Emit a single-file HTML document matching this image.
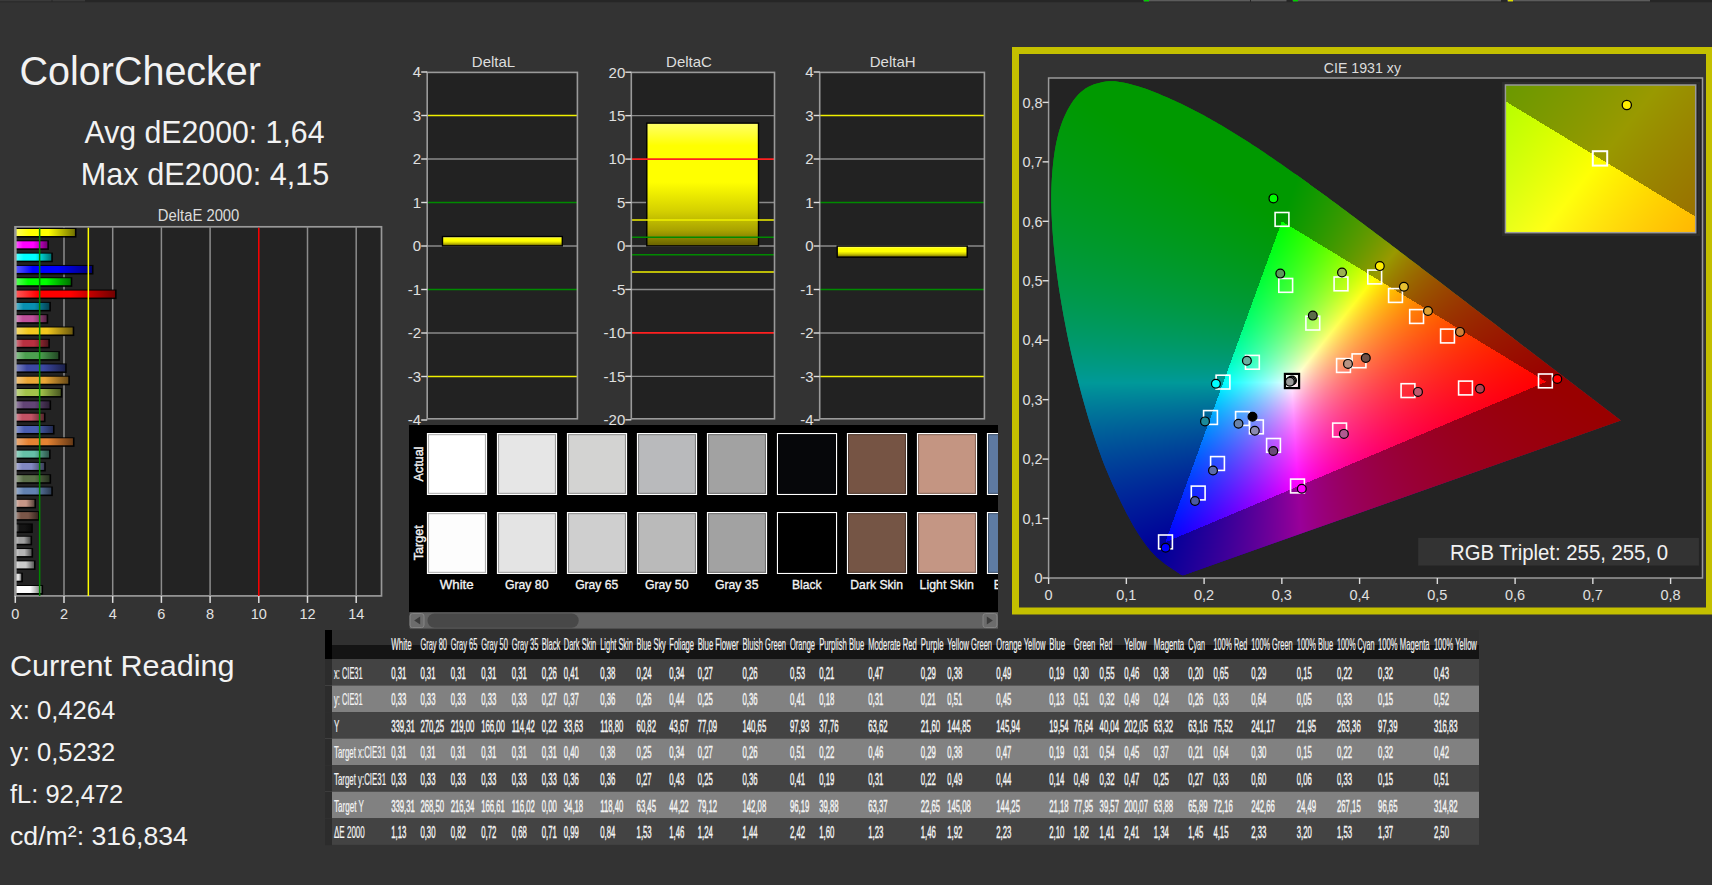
<!DOCTYPE html>
<html><head><meta charset="utf-8"><title>ColorChecker</title>
<style>
html,body{margin:0;padding:0;background:#333333;width:1712px;height:885px;overflow:hidden}
#root{position:relative;width:1712px;height:885px}
#root svg,#root canvas{position:absolute;left:0;top:0;display:block}
text{font-family:"Liberation Sans",sans-serif}
</style></head><body><div id="root">
<svg id="base" width="1712" height="885" viewBox="0 0 1712 885">
<rect x="0" y="0" width="1712" height="885" fill="#333333"/>
<rect x="0" y="0" width="1712" height="2.2" fill="#262626"/>
<rect x="0" y="0" width="51.5" height="1.4" fill="#3a3a3a"/>
<rect x="52.5" y="0" width="32.5" height="1.4" fill="#3a3a3a"/>
<rect x="1143.4" y="0" width="106.6" height="1.4" fill="#5c5c5c"/>
<rect x="1251" y="0" width="35.5" height="1.4" fill="#5c5c5c"/>
<rect x="1292.6" y="0" width="208.4" height="1.4" fill="#5c5c5c"/>
<rect x="1507" y="0" width="143.0" height="1.4" fill="#5c5c5c"/>
<rect x="1144" y="0" width="5" height="1.4" fill="#00d000"/>
<rect x="1293" y="0" width="5" height="1.4" fill="#00d000"/>
<rect x="1508" y="0" width="5" height="1.4" fill="#e0e000"/>
<text x="19.50" y="85.30" font-size="41" fill="#f2f2f2" textLength="241.50" lengthAdjust="spacingAndGlyphs" >ColorChecker</text>
<text x="84.50" y="142.90" font-size="30.5" fill="#f2f2f2" textLength="240.00" lengthAdjust="spacingAndGlyphs" >Avg dE2000: 1,64</text>
<text x="80.80" y="185.20" font-size="30.5" fill="#f2f2f2" textLength="248.60" lengthAdjust="spacingAndGlyphs" >Max dE2000: 4,15</text>
<text x="198.60" y="220.90" font-size="15.8" fill="#dcdcdc" text-anchor="middle" textLength="81.50" lengthAdjust="spacingAndGlyphs" >DeltaE 2000</text>
<rect x="15.0" y="226.8" width="366.5" height="369.09999999999997" fill="#232323" stroke="#999999" stroke-width="1.7"/>
<line x1="64.00" y1="226.8" x2="64.00" y2="595.9" stroke="#8c8c8c" stroke-width="1.5"/>
<line x1="112.70" y1="226.8" x2="112.70" y2="595.9" stroke="#8c8c8c" stroke-width="1.5"/>
<line x1="161.40" y1="226.8" x2="161.40" y2="595.9" stroke="#8c8c8c" stroke-width="1.5"/>
<line x1="210.10" y1="226.8" x2="210.10" y2="595.9" stroke="#8c8c8c" stroke-width="1.5"/>
<line x1="307.50" y1="226.8" x2="307.50" y2="595.9" stroke="#8c8c8c" stroke-width="1.5"/>
<line x1="356.20" y1="226.8" x2="356.20" y2="595.9" stroke="#8c8c8c" stroke-width="1.5"/>
<rect x="16.00" y="228.00" width="60.48" height="9.6" fill="#000000" opacity="0.92"/>
<rect x="16.00" y="229.00" width="58.88" height="7" fill="url(#bg0)"/>
<rect x="16.00" y="240.31" width="32.96" height="9.6" fill="#000000" opacity="0.92"/>
<rect x="16.00" y="241.31" width="31.36" height="7" fill="url(#bg1)"/>
<rect x="16.00" y="252.62" width="36.86" height="9.6" fill="#000000" opacity="0.92"/>
<rect x="16.00" y="253.62" width="35.26" height="7" fill="url(#bg2)"/>
<rect x="16.00" y="264.93" width="77.52" height="9.6" fill="#000000" opacity="0.92"/>
<rect x="16.00" y="265.93" width="75.92" height="7" fill="url(#bg3)"/>
<rect x="16.00" y="277.24" width="56.34" height="9.6" fill="#000000" opacity="0.92"/>
<rect x="16.00" y="278.24" width="54.74" height="7" fill="url(#bg4)"/>
<rect x="16.00" y="289.55" width="100.65" height="9.6" fill="#000000" opacity="0.92"/>
<rect x="16.00" y="290.55" width="99.05" height="7" fill="url(#bg5)"/>
<rect x="16.00" y="301.86" width="34.91" height="9.6" fill="#000000" opacity="0.92"/>
<rect x="16.00" y="302.86" width="33.31" height="7" fill="url(#bg6)"/>
<rect x="16.00" y="314.17" width="32.23" height="9.6" fill="#000000" opacity="0.92"/>
<rect x="16.00" y="315.17" width="30.63" height="7" fill="url(#bg7)"/>
<rect x="16.00" y="326.48" width="58.28" height="9.6" fill="#000000" opacity="0.92"/>
<rect x="16.00" y="327.48" width="56.68" height="7" fill="url(#bg8)"/>
<rect x="16.00" y="338.79" width="33.93" height="9.6" fill="#000000" opacity="0.92"/>
<rect x="16.00" y="339.79" width="32.33" height="7" fill="url(#bg9)"/>
<rect x="16.00" y="351.10" width="43.92" height="9.6" fill="#000000" opacity="0.92"/>
<rect x="16.00" y="352.10" width="42.32" height="7" fill="url(#bg10)"/>
<rect x="16.00" y="363.41" width="50.74" height="9.6" fill="#000000" opacity="0.92"/>
<rect x="16.00" y="364.41" width="49.14" height="7" fill="url(#bg11)"/>
<rect x="16.00" y="375.72" width="53.90" height="9.6" fill="#000000" opacity="0.92"/>
<rect x="16.00" y="376.72" width="52.30" height="7" fill="url(#bg12)"/>
<rect x="16.00" y="388.03" width="46.35" height="9.6" fill="#000000" opacity="0.92"/>
<rect x="16.00" y="389.03" width="44.75" height="7" fill="url(#bg13)"/>
<rect x="16.00" y="400.34" width="35.15" height="9.6" fill="#000000" opacity="0.92"/>
<rect x="16.00" y="401.34" width="33.55" height="7" fill="url(#bg14)"/>
<rect x="16.00" y="412.65" width="29.55" height="9.6" fill="#000000" opacity="0.92"/>
<rect x="16.00" y="413.65" width="27.95" height="7" fill="url(#bg15)"/>
<rect x="16.00" y="424.96" width="38.56" height="9.6" fill="#000000" opacity="0.92"/>
<rect x="16.00" y="425.96" width="36.96" height="7" fill="url(#bg16)"/>
<rect x="16.00" y="437.27" width="58.53" height="9.6" fill="#000000" opacity="0.92"/>
<rect x="16.00" y="438.27" width="56.93" height="7" fill="url(#bg17)"/>
<rect x="16.00" y="449.58" width="34.66" height="9.6" fill="#000000" opacity="0.92"/>
<rect x="16.00" y="450.58" width="33.06" height="7" fill="url(#bg18)"/>
<rect x="16.00" y="461.89" width="29.79" height="9.6" fill="#000000" opacity="0.92"/>
<rect x="16.00" y="462.89" width="28.19" height="7" fill="url(#bg19)"/>
<rect x="16.00" y="474.20" width="35.15" height="9.6" fill="#000000" opacity="0.92"/>
<rect x="16.00" y="475.20" width="33.55" height="7" fill="url(#bg20)"/>
<rect x="16.00" y="486.51" width="36.86" height="9.6" fill="#000000" opacity="0.92"/>
<rect x="16.00" y="487.51" width="35.26" height="7" fill="url(#bg21)"/>
<rect x="16.00" y="498.82" width="20.05" height="9.6" fill="#000000" opacity="0.92"/>
<rect x="16.00" y="499.82" width="18.45" height="7" fill="url(#bg22)"/>
<rect x="16.00" y="511.13" width="23.71" height="9.6" fill="#000000" opacity="0.92"/>
<rect x="16.00" y="512.13" width="22.11" height="7" fill="url(#bg23)"/>
<rect x="16.00" y="523.44" width="16.89" height="9.6" fill="#000000" opacity="0.92"/>
<rect x="16.00" y="524.44" width="15.29" height="7" fill="url(#bg24)"/>
<rect x="16.00" y="535.75" width="16.16" height="9.6" fill="#000000" opacity="0.92"/>
<rect x="16.00" y="536.75" width="14.56" height="7" fill="url(#bg25)"/>
<rect x="16.00" y="548.06" width="17.13" height="9.6" fill="#000000" opacity="0.92"/>
<rect x="16.00" y="549.06" width="15.53" height="7" fill="url(#bg26)"/>
<rect x="16.00" y="560.37" width="19.57" height="9.6" fill="#000000" opacity="0.92"/>
<rect x="16.00" y="561.37" width="17.97" height="7" fill="url(#bg27)"/>
<rect x="16.00" y="572.68" width="6.90" height="9.6" fill="#000000" opacity="0.92"/>
<rect x="16.00" y="573.68" width="5.30" height="7" fill="url(#bg28)"/>
<rect x="16.00" y="584.99" width="27.12" height="9.6" fill="#000000" opacity="0.92"/>
<rect x="16.00" y="585.99" width="25.52" height="7" fill="url(#bg29)"/>
<line x1="39.65" y1="227.8" x2="39.65" y2="595.9" stroke="#008800" stroke-width="1.5"/>
<line x1="88.35" y1="227.8" x2="88.35" y2="595.9" stroke="#ffff00" stroke-width="1.5"/>
<line x1="258.80" y1="227.8" x2="258.80" y2="595.9" stroke="#ff0000" stroke-width="1.5"/>
<line x1="15.8" y1="226.8" x2="15.8" y2="595.9" stroke="#9a9a9a" stroke-width="1.7"/>
<line x1="15.30" y1="595.9" x2="15.30" y2="602.9" stroke="#dddddd" stroke-width="1.5"/>
<text x="15.30" y="618.70" font-size="14.5" fill="#e2e2e2" text-anchor="middle" >0</text>
<line x1="64.00" y1="595.9" x2="64.00" y2="602.9" stroke="#dddddd" stroke-width="1.5"/>
<text x="64.00" y="618.70" font-size="14.5" fill="#e2e2e2" text-anchor="middle" >2</text>
<line x1="112.70" y1="595.9" x2="112.70" y2="602.9" stroke="#dddddd" stroke-width="1.5"/>
<text x="112.70" y="618.70" font-size="14.5" fill="#e2e2e2" text-anchor="middle" >4</text>
<line x1="161.40" y1="595.9" x2="161.40" y2="602.9" stroke="#dddddd" stroke-width="1.5"/>
<text x="161.40" y="618.70" font-size="14.5" fill="#e2e2e2" text-anchor="middle" >6</text>
<line x1="210.10" y1="595.9" x2="210.10" y2="602.9" stroke="#dddddd" stroke-width="1.5"/>
<text x="210.10" y="618.70" font-size="14.5" fill="#e2e2e2" text-anchor="middle" >8</text>
<line x1="258.80" y1="595.9" x2="258.80" y2="602.9" stroke="#dddddd" stroke-width="1.5"/>
<text x="258.80" y="618.70" font-size="14.5" fill="#e2e2e2" text-anchor="middle" >10</text>
<line x1="307.50" y1="595.9" x2="307.50" y2="602.9" stroke="#dddddd" stroke-width="1.5"/>
<text x="307.50" y="618.70" font-size="14.5" fill="#e2e2e2" text-anchor="middle" >12</text>
<line x1="356.20" y1="595.9" x2="356.20" y2="602.9" stroke="#dddddd" stroke-width="1.5"/>
<text x="356.20" y="618.70" font-size="14.5" fill="#e2e2e2" text-anchor="middle" >14</text>
<text x="493.50" y="67.20" font-size="15" fill="#dedede" text-anchor="middle" >DeltaL</text>
<rect x="427.2" y="72.4" width="150.2" height="346.4" fill="#222222"/>
<line x1="427.2" y1="159.00" x2="577.4" y2="159.00" stroke="#8a8a8a" stroke-width="1.4"/>
<line x1="427.2" y1="246.00" x2="577.4" y2="246.00" stroke="#8a8a8a" stroke-width="1.4"/>
<line x1="427.2" y1="333.00" x2="577.4" y2="333.00" stroke="#8a8a8a" stroke-width="1.4"/>
<rect x="441.80" y="235.83" width="121.20" height="10.77" fill="#000000"/>
<rect x="443.20" y="237.23" width="118.40" height="7.97" fill="url(#g_DeltaL)"/>
<line x1="427.2" y1="115.50" x2="577.4" y2="115.50" stroke="#f0f000" stroke-width="1.6"/>
<line x1="427.2" y1="202.50" x2="577.4" y2="202.50" stroke="#008a00" stroke-width="1.6"/>
<line x1="427.2" y1="289.50" x2="577.4" y2="289.50" stroke="#008a00" stroke-width="1.6"/>
<line x1="427.2" y1="376.50" x2="577.4" y2="376.50" stroke="#f0f000" stroke-width="1.6"/>
<rect x="427.2" y="72.4" width="150.2" height="346.4" fill="none" stroke="#9a9a9a" stroke-width="1.6"/>
<line x1="421.2" y1="72.00" x2="427.2" y2="72.00" stroke="#dddddd" stroke-width="1.4"/>
<text x="421.20" y="77.30" font-size="15" fill="#e0e0e0" text-anchor="end" >4</text>
<line x1="421.2" y1="115.50" x2="427.2" y2="115.50" stroke="#dddddd" stroke-width="1.4"/>
<text x="421.20" y="120.80" font-size="15" fill="#e0e0e0" text-anchor="end" >3</text>
<line x1="421.2" y1="159.00" x2="427.2" y2="159.00" stroke="#dddddd" stroke-width="1.4"/>
<text x="421.20" y="164.30" font-size="15" fill="#e0e0e0" text-anchor="end" >2</text>
<line x1="421.2" y1="202.50" x2="427.2" y2="202.50" stroke="#dddddd" stroke-width="1.4"/>
<text x="421.20" y="207.80" font-size="15" fill="#e0e0e0" text-anchor="end" >1</text>
<line x1="421.2" y1="246.00" x2="427.2" y2="246.00" stroke="#dddddd" stroke-width="1.4"/>
<text x="421.20" y="251.30" font-size="15" fill="#e0e0e0" text-anchor="end" >0</text>
<line x1="421.2" y1="289.50" x2="427.2" y2="289.50" stroke="#dddddd" stroke-width="1.4"/>
<text x="421.20" y="294.80" font-size="15" fill="#e0e0e0" text-anchor="end" >-1</text>
<line x1="421.2" y1="333.00" x2="427.2" y2="333.00" stroke="#dddddd" stroke-width="1.4"/>
<text x="421.20" y="338.30" font-size="15" fill="#e0e0e0" text-anchor="end" >-2</text>
<line x1="421.2" y1="376.50" x2="427.2" y2="376.50" stroke="#dddddd" stroke-width="1.4"/>
<text x="421.20" y="381.80" font-size="15" fill="#e0e0e0" text-anchor="end" >-3</text>
<line x1="421.2" y1="420.00" x2="427.2" y2="420.00" stroke="#dddddd" stroke-width="1.4"/>
<text x="421.20" y="425.30" font-size="15" fill="#e0e0e0" text-anchor="end" >-4</text>
<text x="689.00" y="67.20" font-size="15" fill="#dedede" text-anchor="middle" >DeltaC</text>
<rect x="631.3" y="72.4" width="143.20000000000005" height="346.4" fill="#222222"/>
<line x1="631.3" y1="115.65" x2="774.5" y2="115.65" stroke="#8a8a8a" stroke-width="1.4"/>
<line x1="631.3" y1="202.55" x2="774.5" y2="202.55" stroke="#8a8a8a" stroke-width="1.4"/>
<line x1="631.3" y1="246.00" x2="774.5" y2="246.00" stroke="#8a8a8a" stroke-width="1.4"/>
<line x1="631.3" y1="289.45" x2="774.5" y2="289.45" stroke="#8a8a8a" stroke-width="1.4"/>
<line x1="631.3" y1="376.35" x2="774.5" y2="376.35" stroke="#8a8a8a" stroke-width="1.4"/>
<rect x="646.10" y="122.44" width="113.10" height="124.16" fill="#000000"/>
<rect x="647.50" y="123.84" width="110.30" height="121.36" fill="url(#g_DeltaC)"/>
<line x1="631.3" y1="159.10" x2="774.5" y2="159.10" stroke="#ff2020" stroke-width="1.6"/>
<line x1="631.3" y1="219.93" x2="774.5" y2="219.93" stroke="#f0f000" stroke-width="1.6"/>
<line x1="631.3" y1="237.31" x2="774.5" y2="237.31" stroke="#008a00" stroke-width="1.6"/>
<line x1="631.3" y1="254.69" x2="774.5" y2="254.69" stroke="#008a00" stroke-width="1.6"/>
<line x1="631.3" y1="272.07" x2="774.5" y2="272.07" stroke="#f0f000" stroke-width="1.6"/>
<line x1="631.3" y1="332.90" x2="774.5" y2="332.90" stroke="#ff2020" stroke-width="1.6"/>
<rect x="631.3" y="72.4" width="143.20000000000005" height="346.4" fill="none" stroke="#9a9a9a" stroke-width="1.6"/>
<line x1="625.3" y1="72.20" x2="631.3" y2="72.20" stroke="#dddddd" stroke-width="1.4"/>
<text x="625.30" y="77.50" font-size="15" fill="#e0e0e0" text-anchor="end" >20</text>
<line x1="625.3" y1="115.65" x2="631.3" y2="115.65" stroke="#dddddd" stroke-width="1.4"/>
<text x="625.30" y="120.95" font-size="15" fill="#e0e0e0" text-anchor="end" >15</text>
<line x1="625.3" y1="159.10" x2="631.3" y2="159.10" stroke="#dddddd" stroke-width="1.4"/>
<text x="625.30" y="164.40" font-size="15" fill="#e0e0e0" text-anchor="end" >10</text>
<line x1="625.3" y1="202.55" x2="631.3" y2="202.55" stroke="#dddddd" stroke-width="1.4"/>
<text x="625.30" y="207.85" font-size="15" fill="#e0e0e0" text-anchor="end" >5</text>
<line x1="625.3" y1="246.00" x2="631.3" y2="246.00" stroke="#dddddd" stroke-width="1.4"/>
<text x="625.30" y="251.30" font-size="15" fill="#e0e0e0" text-anchor="end" >0</text>
<line x1="625.3" y1="289.45" x2="631.3" y2="289.45" stroke="#dddddd" stroke-width="1.4"/>
<text x="625.30" y="294.75" font-size="15" fill="#e0e0e0" text-anchor="end" >-5</text>
<line x1="625.3" y1="332.90" x2="631.3" y2="332.90" stroke="#dddddd" stroke-width="1.4"/>
<text x="625.30" y="338.20" font-size="15" fill="#e0e0e0" text-anchor="end" >-10</text>
<line x1="625.3" y1="376.35" x2="631.3" y2="376.35" stroke="#dddddd" stroke-width="1.4"/>
<text x="625.30" y="381.65" font-size="15" fill="#e0e0e0" text-anchor="end" >-15</text>
<line x1="625.3" y1="419.80" x2="631.3" y2="419.80" stroke="#dddddd" stroke-width="1.4"/>
<text x="625.30" y="425.10" font-size="15" fill="#e0e0e0" text-anchor="end" >-20</text>
<text x="892.70" y="67.20" font-size="15" fill="#dedede" text-anchor="middle" >DeltaH</text>
<rect x="819.7" y="72.4" width="164.69999999999993" height="346.4" fill="#222222"/>
<line x1="819.7" y1="159.00" x2="984.4" y2="159.00" stroke="#8a8a8a" stroke-width="1.4"/>
<line x1="819.7" y1="246.00" x2="984.4" y2="246.00" stroke="#8a8a8a" stroke-width="1.4"/>
<line x1="819.7" y1="333.00" x2="984.4" y2="333.00" stroke="#8a8a8a" stroke-width="1.4"/>
<rect x="836.50" y="245.40" width="131.40" height="12.51" fill="#000000"/>
<rect x="837.90" y="246.80" width="128.60" height="9.71" fill="url(#g_DeltaH)"/>
<line x1="819.7" y1="115.50" x2="984.4" y2="115.50" stroke="#f0f000" stroke-width="1.6"/>
<line x1="819.7" y1="202.50" x2="984.4" y2="202.50" stroke="#008a00" stroke-width="1.6"/>
<line x1="819.7" y1="289.50" x2="984.4" y2="289.50" stroke="#008a00" stroke-width="1.6"/>
<line x1="819.7" y1="376.50" x2="984.4" y2="376.50" stroke="#f0f000" stroke-width="1.6"/>
<rect x="819.7" y="72.4" width="164.69999999999993" height="346.4" fill="none" stroke="#9a9a9a" stroke-width="1.6"/>
<line x1="813.7" y1="72.00" x2="819.7" y2="72.00" stroke="#dddddd" stroke-width="1.4"/>
<text x="813.70" y="77.30" font-size="15" fill="#e0e0e0" text-anchor="end" >4</text>
<line x1="813.7" y1="115.50" x2="819.7" y2="115.50" stroke="#dddddd" stroke-width="1.4"/>
<text x="813.70" y="120.80" font-size="15" fill="#e0e0e0" text-anchor="end" >3</text>
<line x1="813.7" y1="159.00" x2="819.7" y2="159.00" stroke="#dddddd" stroke-width="1.4"/>
<text x="813.70" y="164.30" font-size="15" fill="#e0e0e0" text-anchor="end" >2</text>
<line x1="813.7" y1="202.50" x2="819.7" y2="202.50" stroke="#dddddd" stroke-width="1.4"/>
<text x="813.70" y="207.80" font-size="15" fill="#e0e0e0" text-anchor="end" >1</text>
<line x1="813.7" y1="246.00" x2="819.7" y2="246.00" stroke="#dddddd" stroke-width="1.4"/>
<text x="813.70" y="251.30" font-size="15" fill="#e0e0e0" text-anchor="end" >0</text>
<line x1="813.7" y1="289.50" x2="819.7" y2="289.50" stroke="#dddddd" stroke-width="1.4"/>
<text x="813.70" y="294.80" font-size="15" fill="#e0e0e0" text-anchor="end" >-1</text>
<line x1="813.7" y1="333.00" x2="819.7" y2="333.00" stroke="#dddddd" stroke-width="1.4"/>
<text x="813.70" y="338.30" font-size="15" fill="#e0e0e0" text-anchor="end" >-2</text>
<line x1="813.7" y1="376.50" x2="819.7" y2="376.50" stroke="#dddddd" stroke-width="1.4"/>
<text x="813.70" y="381.80" font-size="15" fill="#e0e0e0" text-anchor="end" >-3</text>
<line x1="813.7" y1="420.00" x2="819.7" y2="420.00" stroke="#dddddd" stroke-width="1.4"/>
<text x="813.70" y="425.30" font-size="15" fill="#e0e0e0" text-anchor="end" >-4</text>
<rect x="409" y="425" width="589" height="204" fill="#000000"/>
<clipPath id="swclip"><rect x="409" y="425" width="589" height="187"/></clipPath>
<g clip-path="url(#swclip)">
<rect x="426.90" y="433.0" width="60.2" height="62.0" fill="#ffffff"/>
<rect x="428.00" y="434.1" width="58" height="59.8" fill="#ffffff"/>
<rect x="428.55" y="434.65" width="56.9" height="58.7" fill="none" stroke="#000000" stroke-opacity="0.3" stroke-width="1.1"/>
<rect x="426.90" y="512.0" width="60.2" height="62.0" fill="#ffffff"/>
<rect x="428.00" y="513.1" width="58" height="59.8" fill="#fdfdfd"/>
<rect x="428.55" y="513.65" width="56.9" height="58.7" fill="none" stroke="#000000" stroke-opacity="0.3" stroke-width="1.1"/>
<text x="456.70" y="588.80" font-size="13.5" fill="#f4f4f4" text-anchor="middle" textLength="33.90" lengthAdjust="spacingAndGlyphs" stroke="#f4f4f4" stroke-width="0.35">White</text>
<rect x="496.90" y="433.0" width="60.2" height="62.0" fill="#ffffff"/>
<rect x="498.00" y="434.1" width="58" height="59.8" fill="#e6e6e6"/>
<rect x="498.55" y="434.65" width="56.9" height="58.7" fill="none" stroke="#000000" stroke-opacity="0.3" stroke-width="1.1"/>
<rect x="496.90" y="512.0" width="60.2" height="62.0" fill="#ffffff"/>
<rect x="498.00" y="513.1" width="58" height="59.8" fill="#e4e4e4"/>
<rect x="498.55" y="513.65" width="56.9" height="58.7" fill="none" stroke="#000000" stroke-opacity="0.3" stroke-width="1.1"/>
<text x="526.70" y="588.80" font-size="13.5" fill="#f4f4f4" text-anchor="middle" textLength="43.50" lengthAdjust="spacingAndGlyphs" stroke="#f4f4f4" stroke-width="0.35">Gray 80</text>
<rect x="566.90" y="433.0" width="60.2" height="62.0" fill="#ffffff"/>
<rect x="568.00" y="434.1" width="58" height="59.8" fill="#d3d3d2"/>
<rect x="568.55" y="434.65" width="56.9" height="58.7" fill="none" stroke="#000000" stroke-opacity="0.3" stroke-width="1.1"/>
<rect x="566.90" y="512.0" width="60.2" height="62.0" fill="#ffffff"/>
<rect x="568.00" y="513.1" width="58" height="59.8" fill="#cfcfcf"/>
<rect x="568.55" y="513.65" width="56.9" height="58.7" fill="none" stroke="#000000" stroke-opacity="0.3" stroke-width="1.1"/>
<text x="596.70" y="588.80" font-size="13.5" fill="#f4f4f4" text-anchor="middle" textLength="43.10" lengthAdjust="spacingAndGlyphs" stroke="#f4f4f4" stroke-width="0.35">Gray 65</text>
<rect x="636.90" y="433.0" width="60.2" height="62.0" fill="#ffffff"/>
<rect x="638.00" y="434.1" width="58" height="59.8" fill="#b9babc"/>
<rect x="638.55" y="434.65" width="56.9" height="58.7" fill="none" stroke="#000000" stroke-opacity="0.3" stroke-width="1.1"/>
<rect x="636.90" y="512.0" width="60.2" height="62.0" fill="#ffffff"/>
<rect x="638.00" y="513.1" width="58" height="59.8" fill="#bababa"/>
<rect x="638.55" y="513.65" width="56.9" height="58.7" fill="none" stroke="#000000" stroke-opacity="0.3" stroke-width="1.1"/>
<text x="666.70" y="588.80" font-size="13.5" fill="#f4f4f4" text-anchor="middle" textLength="43.50" lengthAdjust="spacingAndGlyphs" stroke="#f4f4f4" stroke-width="0.35">Gray 50</text>
<rect x="706.90" y="433.0" width="60.2" height="62.0" fill="#ffffff"/>
<rect x="708.00" y="434.1" width="58" height="59.8" fill="#a2a2a2"/>
<rect x="708.55" y="434.65" width="56.9" height="58.7" fill="none" stroke="#000000" stroke-opacity="0.3" stroke-width="1.1"/>
<rect x="706.90" y="512.0" width="60.2" height="62.0" fill="#ffffff"/>
<rect x="708.00" y="513.1" width="58" height="59.8" fill="#a2a2a2"/>
<rect x="708.55" y="513.65" width="56.9" height="58.7" fill="none" stroke="#000000" stroke-opacity="0.3" stroke-width="1.1"/>
<text x="736.70" y="588.80" font-size="13.5" fill="#f4f4f4" text-anchor="middle" textLength="43.50" lengthAdjust="spacingAndGlyphs" stroke="#f4f4f4" stroke-width="0.35">Gray 35</text>
<rect x="776.90" y="433.0" width="60.2" height="62.0" fill="#ffffff"/>
<rect x="778.00" y="434.1" width="58" height="59.8" fill="#06070a"/>
<rect x="778.55" y="434.65" width="56.9" height="58.7" fill="none" stroke="#000000" stroke-opacity="0.3" stroke-width="1.1"/>
<rect x="776.90" y="512.0" width="60.2" height="62.0" fill="#ffffff"/>
<rect x="778.00" y="513.1" width="58" height="59.8" fill="#000000"/>
<rect x="778.55" y="513.65" width="56.9" height="58.7" fill="none" stroke="#000000" stroke-opacity="0.3" stroke-width="1.1"/>
<text x="806.70" y="588.80" font-size="13.5" fill="#f4f4f4" text-anchor="middle" textLength="29.60" lengthAdjust="spacingAndGlyphs" stroke="#f4f4f4" stroke-width="0.35">Black</text>
<rect x="846.90" y="433.0" width="60.2" height="62.0" fill="#ffffff"/>
<rect x="848.00" y="434.1" width="58" height="59.8" fill="#765444"/>
<rect x="848.55" y="434.65" width="56.9" height="58.7" fill="none" stroke="#000000" stroke-opacity="0.3" stroke-width="1.1"/>
<rect x="846.90" y="512.0" width="60.2" height="62.0" fill="#ffffff"/>
<rect x="848.00" y="513.1" width="58" height="59.8" fill="#755545"/>
<rect x="848.55" y="513.65" width="56.9" height="58.7" fill="none" stroke="#000000" stroke-opacity="0.3" stroke-width="1.1"/>
<text x="876.70" y="588.80" font-size="13.5" fill="#f4f4f4" text-anchor="middle" textLength="52.70" lengthAdjust="spacingAndGlyphs" stroke="#f4f4f4" stroke-width="0.35">Dark Skin</text>
<rect x="916.90" y="433.0" width="60.2" height="62.0" fill="#ffffff"/>
<rect x="918.00" y="434.1" width="58" height="59.8" fill="#c49582"/>
<rect x="918.55" y="434.65" width="56.9" height="58.7" fill="none" stroke="#000000" stroke-opacity="0.3" stroke-width="1.1"/>
<rect x="916.90" y="512.0" width="60.2" height="62.0" fill="#ffffff"/>
<rect x="918.00" y="513.1" width="58" height="59.8" fill="#c49684"/>
<rect x="918.55" y="513.65" width="56.9" height="58.7" fill="none" stroke="#000000" stroke-opacity="0.3" stroke-width="1.1"/>
<text x="946.70" y="588.80" font-size="13.5" fill="#f4f4f4" text-anchor="middle" textLength="54.20" lengthAdjust="spacingAndGlyphs" stroke="#f4f4f4" stroke-width="0.35">Light Skin</text>
<rect x="986.90" y="433.0" width="60.2" height="62.0" fill="#ffffff"/>
<rect x="988.00" y="434.1" width="58" height="59.8" fill="#5e7aa2"/>
<rect x="988.55" y="434.65" width="56.9" height="58.7" fill="none" stroke="#000000" stroke-opacity="0.3" stroke-width="1.1"/>
<rect x="986.90" y="512.0" width="60.2" height="62.0" fill="#ffffff"/>
<rect x="988.00" y="513.1" width="58" height="59.8" fill="#5e7ca4"/>
<rect x="988.55" y="513.65" width="56.9" height="58.7" fill="none" stroke="#000000" stroke-opacity="0.3" stroke-width="1.1"/>
<text x="1016.70" y="588.80" font-size="13.5" fill="#f4f4f4" text-anchor="middle" textLength="46.00" lengthAdjust="spacingAndGlyphs" stroke="#f4f4f4" stroke-width="0.35">Blue Sky</text>
</g>
<text transform="translate(422.6,464.0) rotate(-90)" font-size="13.5" fill="#f0f0f0" text-anchor="middle" textLength="34.8" lengthAdjust="spacingAndGlyphs" stroke="#f0f0f0" stroke-width="0.4">Actual</text>
<text transform="translate(422.6,542.8) rotate(-90)" font-size="13.5" fill="#f0f0f0" text-anchor="middle" textLength="34.9" lengthAdjust="spacingAndGlyphs" stroke="#f0f0f0" stroke-width="0.4">Target</text>
<rect x="409.3" y="612.2" width="588.7" height="16.6" fill="#636363"/>
<rect x="410" y="613.6" width="14" height="14" rx="2.5" fill="#6c6c6c" stroke="#858585" stroke-width="1"/>
<path d="M414.2 620.4 L420.2 616.4 L420.2 624.6 Z" fill="#3c3c3c"/>
<rect x="427.5" y="613.5" width="151.2" height="14.2" rx="7" fill="#484848"/>
<rect x="983" y="613.6" width="14" height="14" rx="2.5" fill="#6c6c6c" stroke="#858585" stroke-width="1"/>
<path d="M992.8 620.4 L986.8 616.4 L986.8 624.6 Z" fill="#3c3c3c"/>
<rect x="1015.5" y="50.5" width="694" height="560.5" fill="#333333" stroke="#c4c000" stroke-width="7"/>
<text x="1362.40" y="72.70" font-size="14.5" fill="#dcdcdc" text-anchor="middle" textLength="77.30" lengthAdjust="spacingAndGlyphs" >CIE 1931 xy</text>
<rect x="1048.6" y="78" width="653.90" height="500.00" fill="#232323" stroke="#9a9a9a" stroke-width="1.5"/>
<line x1="1042.6" y1="578.00" x2="1048.6" y2="578.00" stroke="#dddddd" stroke-width="1.4"/>
<text x="1042.60" y="583.20" font-size="14.5" fill="#e0e0e0" text-anchor="end" >0</text>
<line x1="1048.60" y1="578.0" x2="1048.60" y2="584.0" stroke="#dddddd" stroke-width="1.4"/>
<text x="1048.60" y="600.30" font-size="14.5" fill="#e0e0e0" text-anchor="middle" >0</text>
<line x1="1042.6" y1="518.55" x2="1048.6" y2="518.55" stroke="#dddddd" stroke-width="1.4"/>
<text x="1042.60" y="523.75" font-size="14.5" fill="#e0e0e0" text-anchor="end" >0,1</text>
<line x1="1126.35" y1="578.0" x2="1126.35" y2="584.0" stroke="#dddddd" stroke-width="1.4"/>
<text x="1126.35" y="600.30" font-size="14.5" fill="#e0e0e0" text-anchor="middle" >0,1</text>
<line x1="1042.6" y1="459.10" x2="1048.6" y2="459.10" stroke="#dddddd" stroke-width="1.4"/>
<text x="1042.60" y="464.30" font-size="14.5" fill="#e0e0e0" text-anchor="end" >0,2</text>
<line x1="1204.10" y1="578.0" x2="1204.10" y2="584.0" stroke="#dddddd" stroke-width="1.4"/>
<text x="1204.10" y="600.30" font-size="14.5" fill="#e0e0e0" text-anchor="middle" >0,2</text>
<line x1="1042.6" y1="399.65" x2="1048.6" y2="399.65" stroke="#dddddd" stroke-width="1.4"/>
<text x="1042.60" y="404.85" font-size="14.5" fill="#e0e0e0" text-anchor="end" >0,3</text>
<line x1="1281.85" y1="578.0" x2="1281.85" y2="584.0" stroke="#dddddd" stroke-width="1.4"/>
<text x="1281.85" y="600.30" font-size="14.5" fill="#e0e0e0" text-anchor="middle" >0,3</text>
<line x1="1042.6" y1="340.20" x2="1048.6" y2="340.20" stroke="#dddddd" stroke-width="1.4"/>
<text x="1042.60" y="345.40" font-size="14.5" fill="#e0e0e0" text-anchor="end" >0,4</text>
<line x1="1359.60" y1="578.0" x2="1359.60" y2="584.0" stroke="#dddddd" stroke-width="1.4"/>
<text x="1359.60" y="600.30" font-size="14.5" fill="#e0e0e0" text-anchor="middle" >0,4</text>
<line x1="1042.6" y1="280.75" x2="1048.6" y2="280.75" stroke="#dddddd" stroke-width="1.4"/>
<text x="1042.60" y="285.95" font-size="14.5" fill="#e0e0e0" text-anchor="end" >0,5</text>
<line x1="1437.35" y1="578.0" x2="1437.35" y2="584.0" stroke="#dddddd" stroke-width="1.4"/>
<text x="1437.35" y="600.30" font-size="14.5" fill="#e0e0e0" text-anchor="middle" >0,5</text>
<line x1="1042.6" y1="221.30" x2="1048.6" y2="221.30" stroke="#dddddd" stroke-width="1.4"/>
<text x="1042.60" y="226.50" font-size="14.5" fill="#e0e0e0" text-anchor="end" >0,6</text>
<line x1="1515.10" y1="578.0" x2="1515.10" y2="584.0" stroke="#dddddd" stroke-width="1.4"/>
<text x="1515.10" y="600.30" font-size="14.5" fill="#e0e0e0" text-anchor="middle" >0,6</text>
<line x1="1042.6" y1="161.85" x2="1048.6" y2="161.85" stroke="#dddddd" stroke-width="1.4"/>
<text x="1042.60" y="167.05" font-size="14.5" fill="#e0e0e0" text-anchor="end" >0,7</text>
<line x1="1592.85" y1="578.0" x2="1592.85" y2="584.0" stroke="#dddddd" stroke-width="1.4"/>
<text x="1592.85" y="600.30" font-size="14.5" fill="#e0e0e0" text-anchor="middle" >0,7</text>
<line x1="1042.6" y1="102.40" x2="1048.6" y2="102.40" stroke="#dddddd" stroke-width="1.4"/>
<text x="1042.60" y="107.60" font-size="14.5" fill="#e0e0e0" text-anchor="end" >0,8</text>
<line x1="1670.60" y1="578.0" x2="1670.60" y2="584.0" stroke="#dddddd" stroke-width="1.4"/>
<text x="1670.60" y="600.30" font-size="14.5" fill="#e0e0e0" text-anchor="middle" >0,8</text>
<text x="10.00" y="676.20" font-size="29" fill="#f2f2f2" textLength="224.50" lengthAdjust="spacingAndGlyphs" >Current Reading</text>
<text x="10.00" y="718.80" font-size="26.5" fill="#f2f2f2" textLength="105.30" lengthAdjust="spacingAndGlyphs" >x: 0,4264</text>
<text x="10.00" y="760.80" font-size="26.5" fill="#f2f2f2" textLength="105.30" lengthAdjust="spacingAndGlyphs" >y: 0,5232</text>
<text x="10.00" y="802.80" font-size="26.5" fill="#f2f2f2" textLength="113.30" lengthAdjust="spacingAndGlyphs" >fL: 92,472</text>
<text x="10.00" y="844.80" font-size="26.5" fill="#f2f2f2" textLength="177.90" lengthAdjust="spacingAndGlyphs" >cd/m²: 316,834</text>
<rect x="325.0" y="630" width="1154.0" height="15" fill="#303030"/>
<rect x="325.0" y="645" width="1154.0" height="14" fill="#141414"/>
<rect x="325.0" y="630" width="7" height="29" fill="#000000"/>
<rect x="325.0" y="659.00" width="1154.0" height="26.59" fill="#434343"/>
<rect x="325.0" y="659.00" width="7" height="26.84" fill="#2c2c2c"/>
<rect x="325.0" y="685.54" width="1154.0" height="26.59" fill="#818181"/>
<rect x="325.0" y="685.54" width="7" height="26.84" fill="#2c2c2c"/>
<rect x="325.0" y="712.09" width="1154.0" height="26.59" fill="#434343"/>
<rect x="325.0" y="712.09" width="7" height="26.84" fill="#2c2c2c"/>
<rect x="325.0" y="738.63" width="1154.0" height="26.59" fill="#818181"/>
<rect x="325.0" y="738.63" width="7" height="26.84" fill="#2c2c2c"/>
<rect x="325.0" y="765.17" width="1154.0" height="26.59" fill="#434343"/>
<rect x="325.0" y="765.17" width="7" height="26.84" fill="#2c2c2c"/>
<rect x="325.0" y="791.71" width="1154.0" height="26.59" fill="#818181"/>
<rect x="325.0" y="791.71" width="7" height="26.84" fill="#2c2c2c"/>
<rect x="325.0" y="818.26" width="1154.0" height="26.59" fill="#434343"/>
<rect x="325.0" y="818.26" width="7" height="26.84" fill="#2c2c2c"/>
<text x="391.20" y="650.20" font-size="16.5" fill="#f4f4f4" stroke="#f4f4f4" stroke-width="0.22" textLength="20.40" lengthAdjust="spacingAndGlyphs">White</text>
<text x="420.40" y="650.20" font-size="16.5" fill="#f4f4f4" stroke="#f4f4f4" stroke-width="0.22" textLength="26.60" lengthAdjust="spacingAndGlyphs">Gray 80</text>
<text x="450.70" y="650.20" font-size="16.5" fill="#f4f4f4" stroke="#f4f4f4" stroke-width="0.22" textLength="26.60" lengthAdjust="spacingAndGlyphs">Gray 65</text>
<text x="481.20" y="650.20" font-size="16.5" fill="#f4f4f4" stroke="#f4f4f4" stroke-width="0.22" textLength="26.60" lengthAdjust="spacingAndGlyphs">Gray 50</text>
<text x="511.80" y="650.20" font-size="16.5" fill="#f4f4f4" stroke="#f4f4f4" stroke-width="0.22" textLength="26.60" lengthAdjust="spacingAndGlyphs">Gray 35</text>
<text x="541.80" y="650.20" font-size="16.5" fill="#f4f4f4" stroke="#f4f4f4" stroke-width="0.22" textLength="18.60" lengthAdjust="spacingAndGlyphs">Black</text>
<text x="563.80" y="650.20" font-size="16.5" fill="#f4f4f4" stroke="#f4f4f4" stroke-width="0.22" textLength="32.40" lengthAdjust="spacingAndGlyphs">Dark Skin</text>
<text x="600.20" y="650.20" font-size="16.5" fill="#f4f4f4" stroke="#f4f4f4" stroke-width="0.22" textLength="32.70" lengthAdjust="spacingAndGlyphs">Light Skin</text>
<text x="636.60" y="650.20" font-size="16.5" fill="#f4f4f4" stroke="#f4f4f4" stroke-width="0.22" textLength="29.20" lengthAdjust="spacingAndGlyphs">Blue Sky</text>
<text x="669.30" y="650.20" font-size="16.5" fill="#f4f4f4" stroke="#f4f4f4" stroke-width="0.22" textLength="24.70" lengthAdjust="spacingAndGlyphs">Foliage</text>
<text x="697.70" y="650.20" font-size="16.5" fill="#f4f4f4" stroke="#f4f4f4" stroke-width="0.22" textLength="40.90" lengthAdjust="spacingAndGlyphs">Blue Flower</text>
<text x="742.50" y="650.20" font-size="16.5" fill="#f4f4f4" stroke="#f4f4f4" stroke-width="0.22" textLength="43.50" lengthAdjust="spacingAndGlyphs">Bluish Green</text>
<text x="790.00" y="650.20" font-size="16.5" fill="#f4f4f4" stroke="#f4f4f4" stroke-width="0.22" textLength="25.00" lengthAdjust="spacingAndGlyphs">Orange</text>
<text x="819.20" y="650.20" font-size="16.5" fill="#f4f4f4" stroke="#f4f4f4" stroke-width="0.22" textLength="45.10" lengthAdjust="spacingAndGlyphs">Purplish Blue</text>
<text x="868.20" y="650.20" font-size="16.5" fill="#f4f4f4" stroke="#f4f4f4" stroke-width="0.22" textLength="48.60" lengthAdjust="spacingAndGlyphs">Moderate Red</text>
<text x="920.80" y="650.20" font-size="16.5" fill="#f4f4f4" stroke="#f4f4f4" stroke-width="0.22" textLength="22.70" lengthAdjust="spacingAndGlyphs">Purple</text>
<text x="947.20" y="650.20" font-size="16.5" fill="#f4f4f4" stroke="#f4f4f4" stroke-width="0.22" textLength="44.90" lengthAdjust="spacingAndGlyphs">Yellow Green</text>
<text x="996.30" y="650.20" font-size="16.5" fill="#f4f4f4" stroke="#f4f4f4" stroke-width="0.22" textLength="49.10" lengthAdjust="spacingAndGlyphs">Orange Yellow</text>
<text x="1049.30" y="650.20" font-size="16.5" fill="#f4f4f4" stroke="#f4f4f4" stroke-width="0.22" textLength="15.70" lengthAdjust="spacingAndGlyphs">Blue</text>
<text x="1073.80" y="650.20" font-size="16.5" fill="#f4f4f4" stroke="#f4f4f4" stroke-width="0.22" textLength="21.50" lengthAdjust="spacingAndGlyphs">Green</text>
<text x="1099.60" y="650.20" font-size="16.5" fill="#f4f4f4" stroke="#f4f4f4" stroke-width="0.22" textLength="12.70" lengthAdjust="spacingAndGlyphs">Red</text>
<text x="1124.30" y="650.20" font-size="16.5" fill="#f4f4f4" stroke="#f4f4f4" stroke-width="0.22" textLength="22.00" lengthAdjust="spacingAndGlyphs">Yellow</text>
<text x="1153.80" y="650.20" font-size="16.5" fill="#f4f4f4" stroke="#f4f4f4" stroke-width="0.22" textLength="30.40" lengthAdjust="spacingAndGlyphs">Magenta</text>
<text x="1188.20" y="650.20" font-size="16.5" fill="#f4f4f4" stroke="#f4f4f4" stroke-width="0.22" textLength="16.80" lengthAdjust="spacingAndGlyphs">Cyan</text>
<text x="1213.40" y="650.20" font-size="16.5" fill="#f4f4f4" stroke="#f4f4f4" stroke-width="0.22" textLength="33.80" lengthAdjust="spacingAndGlyphs">100% Red</text>
<text x="1251.20" y="650.20" font-size="16.5" fill="#f4f4f4" stroke="#f4f4f4" stroke-width="0.22" textLength="41.40" lengthAdjust="spacingAndGlyphs">100% Green</text>
<text x="1296.70" y="650.20" font-size="16.5" fill="#f4f4f4" stroke="#f4f4f4" stroke-width="0.22" textLength="36.40" lengthAdjust="spacingAndGlyphs">100% Blue</text>
<text x="1337.00" y="650.20" font-size="16.5" fill="#f4f4f4" stroke="#f4f4f4" stroke-width="0.22" textLength="37.60" lengthAdjust="spacingAndGlyphs">100% Cyan</text>
<text x="1378.10" y="650.20" font-size="16.5" fill="#f4f4f4" stroke="#f4f4f4" stroke-width="0.22" textLength="51.50" lengthAdjust="spacingAndGlyphs">100% Magenta</text>
<text x="1433.90" y="650.20" font-size="16.5" fill="#f4f4f4" stroke="#f4f4f4" stroke-width="0.22" textLength="42.90" lengthAdjust="spacingAndGlyphs">100% Yellow</text>
<text x="334.00" y="678.80" font-size="16.5" fill="#f4f4f4" stroke="#f4f4f4" stroke-width="0.22" textLength="28.70" lengthAdjust="spacingAndGlyphs">x: CIE31</text>
<text transform="translate(391.20,678.80) scale(0.47,1)" font-size="16.5" fill="#f4f4f4" stroke="#f4f4f4" stroke-width="0.45">0,31</text>
<text transform="translate(420.40,678.80) scale(0.47,1)" font-size="16.5" fill="#f4f4f4" stroke="#f4f4f4" stroke-width="0.45">0,31</text>
<text transform="translate(450.70,678.80) scale(0.47,1)" font-size="16.5" fill="#f4f4f4" stroke="#f4f4f4" stroke-width="0.45">0,31</text>
<text transform="translate(481.20,678.80) scale(0.47,1)" font-size="16.5" fill="#f4f4f4" stroke="#f4f4f4" stroke-width="0.45">0,31</text>
<text transform="translate(511.80,678.80) scale(0.47,1)" font-size="16.5" fill="#f4f4f4" stroke="#f4f4f4" stroke-width="0.45">0,31</text>
<text transform="translate(541.80,678.80) scale(0.47,1)" font-size="16.5" fill="#f4f4f4" stroke="#f4f4f4" stroke-width="0.45">0,26</text>
<text transform="translate(563.80,678.80) scale(0.47,1)" font-size="16.5" fill="#f4f4f4" stroke="#f4f4f4" stroke-width="0.45">0,41</text>
<text transform="translate(600.20,678.80) scale(0.47,1)" font-size="16.5" fill="#f4f4f4" stroke="#f4f4f4" stroke-width="0.45">0,38</text>
<text transform="translate(636.60,678.80) scale(0.47,1)" font-size="16.5" fill="#f4f4f4" stroke="#f4f4f4" stroke-width="0.45">0,24</text>
<text transform="translate(669.30,678.80) scale(0.47,1)" font-size="16.5" fill="#f4f4f4" stroke="#f4f4f4" stroke-width="0.45">0,34</text>
<text transform="translate(697.70,678.80) scale(0.47,1)" font-size="16.5" fill="#f4f4f4" stroke="#f4f4f4" stroke-width="0.45">0,27</text>
<text transform="translate(742.50,678.80) scale(0.47,1)" font-size="16.5" fill="#f4f4f4" stroke="#f4f4f4" stroke-width="0.45">0,26</text>
<text transform="translate(790.00,678.80) scale(0.47,1)" font-size="16.5" fill="#f4f4f4" stroke="#f4f4f4" stroke-width="0.45">0,53</text>
<text transform="translate(819.20,678.80) scale(0.47,1)" font-size="16.5" fill="#f4f4f4" stroke="#f4f4f4" stroke-width="0.45">0,21</text>
<text transform="translate(868.20,678.80) scale(0.47,1)" font-size="16.5" fill="#f4f4f4" stroke="#f4f4f4" stroke-width="0.45">0,47</text>
<text transform="translate(920.80,678.80) scale(0.47,1)" font-size="16.5" fill="#f4f4f4" stroke="#f4f4f4" stroke-width="0.45">0,29</text>
<text transform="translate(947.20,678.80) scale(0.47,1)" font-size="16.5" fill="#f4f4f4" stroke="#f4f4f4" stroke-width="0.45">0,38</text>
<text transform="translate(996.30,678.80) scale(0.47,1)" font-size="16.5" fill="#f4f4f4" stroke="#f4f4f4" stroke-width="0.45">0,49</text>
<text transform="translate(1049.30,678.80) scale(0.47,1)" font-size="16.5" fill="#f4f4f4" stroke="#f4f4f4" stroke-width="0.45">0,19</text>
<text transform="translate(1073.80,678.80) scale(0.47,1)" font-size="16.5" fill="#f4f4f4" stroke="#f4f4f4" stroke-width="0.45">0,30</text>
<text transform="translate(1099.60,678.80) scale(0.47,1)" font-size="16.5" fill="#f4f4f4" stroke="#f4f4f4" stroke-width="0.45">0,55</text>
<text transform="translate(1124.30,678.80) scale(0.47,1)" font-size="16.5" fill="#f4f4f4" stroke="#f4f4f4" stroke-width="0.45">0,46</text>
<text transform="translate(1153.80,678.80) scale(0.47,1)" font-size="16.5" fill="#f4f4f4" stroke="#f4f4f4" stroke-width="0.45">0,38</text>
<text transform="translate(1188.20,678.80) scale(0.47,1)" font-size="16.5" fill="#f4f4f4" stroke="#f4f4f4" stroke-width="0.45">0,20</text>
<text transform="translate(1213.40,678.80) scale(0.47,1)" font-size="16.5" fill="#f4f4f4" stroke="#f4f4f4" stroke-width="0.45">0,65</text>
<text transform="translate(1251.20,678.80) scale(0.47,1)" font-size="16.5" fill="#f4f4f4" stroke="#f4f4f4" stroke-width="0.45">0,29</text>
<text transform="translate(1296.70,678.80) scale(0.47,1)" font-size="16.5" fill="#f4f4f4" stroke="#f4f4f4" stroke-width="0.45">0,15</text>
<text transform="translate(1337.00,678.80) scale(0.47,1)" font-size="16.5" fill="#f4f4f4" stroke="#f4f4f4" stroke-width="0.45">0,22</text>
<text transform="translate(1378.10,678.80) scale(0.47,1)" font-size="16.5" fill="#f4f4f4" stroke="#f4f4f4" stroke-width="0.45">0,32</text>
<text transform="translate(1433.90,678.80) scale(0.47,1)" font-size="16.5" fill="#f4f4f4" stroke="#f4f4f4" stroke-width="0.45">0,43</text>
<text x="334.00" y="705.34" font-size="16.5" fill="#f4f4f4" stroke="#f4f4f4" stroke-width="0.22" textLength="28.70" lengthAdjust="spacingAndGlyphs">y: CIE31</text>
<text transform="translate(391.20,705.34) scale(0.47,1)" font-size="16.5" fill="#f4f4f4" stroke="#f4f4f4" stroke-width="0.45">0,33</text>
<text transform="translate(420.40,705.34) scale(0.47,1)" font-size="16.5" fill="#f4f4f4" stroke="#f4f4f4" stroke-width="0.45">0,33</text>
<text transform="translate(450.70,705.34) scale(0.47,1)" font-size="16.5" fill="#f4f4f4" stroke="#f4f4f4" stroke-width="0.45">0,33</text>
<text transform="translate(481.20,705.34) scale(0.47,1)" font-size="16.5" fill="#f4f4f4" stroke="#f4f4f4" stroke-width="0.45">0,33</text>
<text transform="translate(511.80,705.34) scale(0.47,1)" font-size="16.5" fill="#f4f4f4" stroke="#f4f4f4" stroke-width="0.45">0,33</text>
<text transform="translate(541.80,705.34) scale(0.47,1)" font-size="16.5" fill="#f4f4f4" stroke="#f4f4f4" stroke-width="0.45">0,27</text>
<text transform="translate(563.80,705.34) scale(0.47,1)" font-size="16.5" fill="#f4f4f4" stroke="#f4f4f4" stroke-width="0.45">0,37</text>
<text transform="translate(600.20,705.34) scale(0.47,1)" font-size="16.5" fill="#f4f4f4" stroke="#f4f4f4" stroke-width="0.45">0,36</text>
<text transform="translate(636.60,705.34) scale(0.47,1)" font-size="16.5" fill="#f4f4f4" stroke="#f4f4f4" stroke-width="0.45">0,26</text>
<text transform="translate(669.30,705.34) scale(0.47,1)" font-size="16.5" fill="#f4f4f4" stroke="#f4f4f4" stroke-width="0.45">0,44</text>
<text transform="translate(697.70,705.34) scale(0.47,1)" font-size="16.5" fill="#f4f4f4" stroke="#f4f4f4" stroke-width="0.45">0,25</text>
<text transform="translate(742.50,705.34) scale(0.47,1)" font-size="16.5" fill="#f4f4f4" stroke="#f4f4f4" stroke-width="0.45">0,36</text>
<text transform="translate(790.00,705.34) scale(0.47,1)" font-size="16.5" fill="#f4f4f4" stroke="#f4f4f4" stroke-width="0.45">0,41</text>
<text transform="translate(819.20,705.34) scale(0.47,1)" font-size="16.5" fill="#f4f4f4" stroke="#f4f4f4" stroke-width="0.45">0,18</text>
<text transform="translate(868.20,705.34) scale(0.47,1)" font-size="16.5" fill="#f4f4f4" stroke="#f4f4f4" stroke-width="0.45">0,31</text>
<text transform="translate(920.80,705.34) scale(0.47,1)" font-size="16.5" fill="#f4f4f4" stroke="#f4f4f4" stroke-width="0.45">0,21</text>
<text transform="translate(947.20,705.34) scale(0.47,1)" font-size="16.5" fill="#f4f4f4" stroke="#f4f4f4" stroke-width="0.45">0,51</text>
<text transform="translate(996.30,705.34) scale(0.47,1)" font-size="16.5" fill="#f4f4f4" stroke="#f4f4f4" stroke-width="0.45">0,45</text>
<text transform="translate(1049.30,705.34) scale(0.47,1)" font-size="16.5" fill="#f4f4f4" stroke="#f4f4f4" stroke-width="0.45">0,13</text>
<text transform="translate(1073.80,705.34) scale(0.47,1)" font-size="16.5" fill="#f4f4f4" stroke="#f4f4f4" stroke-width="0.45">0,51</text>
<text transform="translate(1099.60,705.34) scale(0.47,1)" font-size="16.5" fill="#f4f4f4" stroke="#f4f4f4" stroke-width="0.45">0,32</text>
<text transform="translate(1124.30,705.34) scale(0.47,1)" font-size="16.5" fill="#f4f4f4" stroke="#f4f4f4" stroke-width="0.45">0,49</text>
<text transform="translate(1153.80,705.34) scale(0.47,1)" font-size="16.5" fill="#f4f4f4" stroke="#f4f4f4" stroke-width="0.45">0,24</text>
<text transform="translate(1188.20,705.34) scale(0.47,1)" font-size="16.5" fill="#f4f4f4" stroke="#f4f4f4" stroke-width="0.45">0,26</text>
<text transform="translate(1213.40,705.34) scale(0.47,1)" font-size="16.5" fill="#f4f4f4" stroke="#f4f4f4" stroke-width="0.45">0,33</text>
<text transform="translate(1251.20,705.34) scale(0.47,1)" font-size="16.5" fill="#f4f4f4" stroke="#f4f4f4" stroke-width="0.45">0,64</text>
<text transform="translate(1296.70,705.34) scale(0.47,1)" font-size="16.5" fill="#f4f4f4" stroke="#f4f4f4" stroke-width="0.45">0,05</text>
<text transform="translate(1337.00,705.34) scale(0.47,1)" font-size="16.5" fill="#f4f4f4" stroke="#f4f4f4" stroke-width="0.45">0,33</text>
<text transform="translate(1378.10,705.34) scale(0.47,1)" font-size="16.5" fill="#f4f4f4" stroke="#f4f4f4" stroke-width="0.45">0,15</text>
<text transform="translate(1433.90,705.34) scale(0.47,1)" font-size="16.5" fill="#f4f4f4" stroke="#f4f4f4" stroke-width="0.45">0,52</text>
<text x="334.00" y="731.89" font-size="16.5" fill="#f4f4f4" stroke="#f4f4f4" stroke-width="0.22" textLength="5.30" lengthAdjust="spacingAndGlyphs">Y</text>
<text transform="translate(391.20,731.89) scale(0.47,1)" font-size="16.5" fill="#f4f4f4" stroke="#f4f4f4" stroke-width="0.45">339,31</text>
<text transform="translate(420.40,731.89) scale(0.47,1)" font-size="16.5" fill="#f4f4f4" stroke="#f4f4f4" stroke-width="0.45">270,25</text>
<text transform="translate(450.70,731.89) scale(0.47,1)" font-size="16.5" fill="#f4f4f4" stroke="#f4f4f4" stroke-width="0.45">219,00</text>
<text transform="translate(481.20,731.89) scale(0.47,1)" font-size="16.5" fill="#f4f4f4" stroke="#f4f4f4" stroke-width="0.45">166,00</text>
<text transform="translate(511.80,731.89) scale(0.47,1)" font-size="16.5" fill="#f4f4f4" stroke="#f4f4f4" stroke-width="0.45">114,42</text>
<text transform="translate(541.80,731.89) scale(0.47,1)" font-size="16.5" fill="#f4f4f4" stroke="#f4f4f4" stroke-width="0.45">0,22</text>
<text transform="translate(563.80,731.89) scale(0.47,1)" font-size="16.5" fill="#f4f4f4" stroke="#f4f4f4" stroke-width="0.45">33,63</text>
<text transform="translate(600.20,731.89) scale(0.47,1)" font-size="16.5" fill="#f4f4f4" stroke="#f4f4f4" stroke-width="0.45">118,80</text>
<text transform="translate(636.60,731.89) scale(0.47,1)" font-size="16.5" fill="#f4f4f4" stroke="#f4f4f4" stroke-width="0.45">60,82</text>
<text transform="translate(669.30,731.89) scale(0.47,1)" font-size="16.5" fill="#f4f4f4" stroke="#f4f4f4" stroke-width="0.45">43,67</text>
<text transform="translate(697.70,731.89) scale(0.47,1)" font-size="16.5" fill="#f4f4f4" stroke="#f4f4f4" stroke-width="0.45">77,09</text>
<text transform="translate(742.50,731.89) scale(0.47,1)" font-size="16.5" fill="#f4f4f4" stroke="#f4f4f4" stroke-width="0.45">140,65</text>
<text transform="translate(790.00,731.89) scale(0.47,1)" font-size="16.5" fill="#f4f4f4" stroke="#f4f4f4" stroke-width="0.45">97,93</text>
<text transform="translate(819.20,731.89) scale(0.47,1)" font-size="16.5" fill="#f4f4f4" stroke="#f4f4f4" stroke-width="0.45">37,76</text>
<text transform="translate(868.20,731.89) scale(0.47,1)" font-size="16.5" fill="#f4f4f4" stroke="#f4f4f4" stroke-width="0.45">63,62</text>
<text transform="translate(920.80,731.89) scale(0.47,1)" font-size="16.5" fill="#f4f4f4" stroke="#f4f4f4" stroke-width="0.45">21,60</text>
<text transform="translate(947.20,731.89) scale(0.47,1)" font-size="16.5" fill="#f4f4f4" stroke="#f4f4f4" stroke-width="0.45">144,85</text>
<text transform="translate(996.30,731.89) scale(0.47,1)" font-size="16.5" fill="#f4f4f4" stroke="#f4f4f4" stroke-width="0.45">145,94</text>
<text transform="translate(1049.30,731.89) scale(0.47,1)" font-size="16.5" fill="#f4f4f4" stroke="#f4f4f4" stroke-width="0.45">19,54</text>
<text transform="translate(1073.80,731.89) scale(0.47,1)" font-size="16.5" fill="#f4f4f4" stroke="#f4f4f4" stroke-width="0.45">76,64</text>
<text transform="translate(1099.60,731.89) scale(0.47,1)" font-size="16.5" fill="#f4f4f4" stroke="#f4f4f4" stroke-width="0.45">40,04</text>
<text transform="translate(1124.30,731.89) scale(0.47,1)" font-size="16.5" fill="#f4f4f4" stroke="#f4f4f4" stroke-width="0.45">202,05</text>
<text transform="translate(1153.80,731.89) scale(0.47,1)" font-size="16.5" fill="#f4f4f4" stroke="#f4f4f4" stroke-width="0.45">63,32</text>
<text transform="translate(1188.20,731.89) scale(0.47,1)" font-size="16.5" fill="#f4f4f4" stroke="#f4f4f4" stroke-width="0.45">63,16</text>
<text transform="translate(1213.40,731.89) scale(0.47,1)" font-size="16.5" fill="#f4f4f4" stroke="#f4f4f4" stroke-width="0.45">75,52</text>
<text transform="translate(1251.20,731.89) scale(0.47,1)" font-size="16.5" fill="#f4f4f4" stroke="#f4f4f4" stroke-width="0.45">241,17</text>
<text transform="translate(1296.70,731.89) scale(0.47,1)" font-size="16.5" fill="#f4f4f4" stroke="#f4f4f4" stroke-width="0.45">21,95</text>
<text transform="translate(1337.00,731.89) scale(0.47,1)" font-size="16.5" fill="#f4f4f4" stroke="#f4f4f4" stroke-width="0.45">263,36</text>
<text transform="translate(1378.10,731.89) scale(0.47,1)" font-size="16.5" fill="#f4f4f4" stroke="#f4f4f4" stroke-width="0.45">97,39</text>
<text transform="translate(1433.90,731.89) scale(0.47,1)" font-size="16.5" fill="#f4f4f4" stroke="#f4f4f4" stroke-width="0.45">316,83</text>
<text x="334.00" y="758.43" font-size="16.5" fill="#f4f4f4" stroke="#f4f4f4" stroke-width="0.22" textLength="52.00" lengthAdjust="spacingAndGlyphs">Target x:CIE31</text>
<text transform="translate(391.20,758.43) scale(0.47,1)" font-size="16.5" fill="#f4f4f4" stroke="#f4f4f4" stroke-width="0.45">0,31</text>
<text transform="translate(420.40,758.43) scale(0.47,1)" font-size="16.5" fill="#f4f4f4" stroke="#f4f4f4" stroke-width="0.45">0,31</text>
<text transform="translate(450.70,758.43) scale(0.47,1)" font-size="16.5" fill="#f4f4f4" stroke="#f4f4f4" stroke-width="0.45">0,31</text>
<text transform="translate(481.20,758.43) scale(0.47,1)" font-size="16.5" fill="#f4f4f4" stroke="#f4f4f4" stroke-width="0.45">0,31</text>
<text transform="translate(511.80,758.43) scale(0.47,1)" font-size="16.5" fill="#f4f4f4" stroke="#f4f4f4" stroke-width="0.45">0,31</text>
<text transform="translate(541.80,758.43) scale(0.47,1)" font-size="16.5" fill="#f4f4f4" stroke="#f4f4f4" stroke-width="0.45">0,31</text>
<text transform="translate(563.80,758.43) scale(0.47,1)" font-size="16.5" fill="#f4f4f4" stroke="#f4f4f4" stroke-width="0.45">0,40</text>
<text transform="translate(600.20,758.43) scale(0.47,1)" font-size="16.5" fill="#f4f4f4" stroke="#f4f4f4" stroke-width="0.45">0,38</text>
<text transform="translate(636.60,758.43) scale(0.47,1)" font-size="16.5" fill="#f4f4f4" stroke="#f4f4f4" stroke-width="0.45">0,25</text>
<text transform="translate(669.30,758.43) scale(0.47,1)" font-size="16.5" fill="#f4f4f4" stroke="#f4f4f4" stroke-width="0.45">0,34</text>
<text transform="translate(697.70,758.43) scale(0.47,1)" font-size="16.5" fill="#f4f4f4" stroke="#f4f4f4" stroke-width="0.45">0,27</text>
<text transform="translate(742.50,758.43) scale(0.47,1)" font-size="16.5" fill="#f4f4f4" stroke="#f4f4f4" stroke-width="0.45">0,26</text>
<text transform="translate(790.00,758.43) scale(0.47,1)" font-size="16.5" fill="#f4f4f4" stroke="#f4f4f4" stroke-width="0.45">0,51</text>
<text transform="translate(819.20,758.43) scale(0.47,1)" font-size="16.5" fill="#f4f4f4" stroke="#f4f4f4" stroke-width="0.45">0,22</text>
<text transform="translate(868.20,758.43) scale(0.47,1)" font-size="16.5" fill="#f4f4f4" stroke="#f4f4f4" stroke-width="0.45">0,46</text>
<text transform="translate(920.80,758.43) scale(0.47,1)" font-size="16.5" fill="#f4f4f4" stroke="#f4f4f4" stroke-width="0.45">0,29</text>
<text transform="translate(947.20,758.43) scale(0.47,1)" font-size="16.5" fill="#f4f4f4" stroke="#f4f4f4" stroke-width="0.45">0,38</text>
<text transform="translate(996.30,758.43) scale(0.47,1)" font-size="16.5" fill="#f4f4f4" stroke="#f4f4f4" stroke-width="0.45">0,47</text>
<text transform="translate(1049.30,758.43) scale(0.47,1)" font-size="16.5" fill="#f4f4f4" stroke="#f4f4f4" stroke-width="0.45">0,19</text>
<text transform="translate(1073.80,758.43) scale(0.47,1)" font-size="16.5" fill="#f4f4f4" stroke="#f4f4f4" stroke-width="0.45">0,31</text>
<text transform="translate(1099.60,758.43) scale(0.47,1)" font-size="16.5" fill="#f4f4f4" stroke="#f4f4f4" stroke-width="0.45">0,54</text>
<text transform="translate(1124.30,758.43) scale(0.47,1)" font-size="16.5" fill="#f4f4f4" stroke="#f4f4f4" stroke-width="0.45">0,45</text>
<text transform="translate(1153.80,758.43) scale(0.47,1)" font-size="16.5" fill="#f4f4f4" stroke="#f4f4f4" stroke-width="0.45">0,37</text>
<text transform="translate(1188.20,758.43) scale(0.47,1)" font-size="16.5" fill="#f4f4f4" stroke="#f4f4f4" stroke-width="0.45">0,21</text>
<text transform="translate(1213.40,758.43) scale(0.47,1)" font-size="16.5" fill="#f4f4f4" stroke="#f4f4f4" stroke-width="0.45">0,64</text>
<text transform="translate(1251.20,758.43) scale(0.47,1)" font-size="16.5" fill="#f4f4f4" stroke="#f4f4f4" stroke-width="0.45">0,30</text>
<text transform="translate(1296.70,758.43) scale(0.47,1)" font-size="16.5" fill="#f4f4f4" stroke="#f4f4f4" stroke-width="0.45">0,15</text>
<text transform="translate(1337.00,758.43) scale(0.47,1)" font-size="16.5" fill="#f4f4f4" stroke="#f4f4f4" stroke-width="0.45">0,22</text>
<text transform="translate(1378.10,758.43) scale(0.47,1)" font-size="16.5" fill="#f4f4f4" stroke="#f4f4f4" stroke-width="0.45">0,32</text>
<text transform="translate(1433.90,758.43) scale(0.47,1)" font-size="16.5" fill="#f4f4f4" stroke="#f4f4f4" stroke-width="0.45">0,42</text>
<text x="334.00" y="784.97" font-size="16.5" fill="#f4f4f4" stroke="#f4f4f4" stroke-width="0.22" textLength="52.00" lengthAdjust="spacingAndGlyphs">Target y:CIE31</text>
<text transform="translate(391.20,784.97) scale(0.47,1)" font-size="16.5" fill="#f4f4f4" stroke="#f4f4f4" stroke-width="0.45">0,33</text>
<text transform="translate(420.40,784.97) scale(0.47,1)" font-size="16.5" fill="#f4f4f4" stroke="#f4f4f4" stroke-width="0.45">0,33</text>
<text transform="translate(450.70,784.97) scale(0.47,1)" font-size="16.5" fill="#f4f4f4" stroke="#f4f4f4" stroke-width="0.45">0,33</text>
<text transform="translate(481.20,784.97) scale(0.47,1)" font-size="16.5" fill="#f4f4f4" stroke="#f4f4f4" stroke-width="0.45">0,33</text>
<text transform="translate(511.80,784.97) scale(0.47,1)" font-size="16.5" fill="#f4f4f4" stroke="#f4f4f4" stroke-width="0.45">0,33</text>
<text transform="translate(541.80,784.97) scale(0.47,1)" font-size="16.5" fill="#f4f4f4" stroke="#f4f4f4" stroke-width="0.45">0,33</text>
<text transform="translate(563.80,784.97) scale(0.47,1)" font-size="16.5" fill="#f4f4f4" stroke="#f4f4f4" stroke-width="0.45">0,36</text>
<text transform="translate(600.20,784.97) scale(0.47,1)" font-size="16.5" fill="#f4f4f4" stroke="#f4f4f4" stroke-width="0.45">0,36</text>
<text transform="translate(636.60,784.97) scale(0.47,1)" font-size="16.5" fill="#f4f4f4" stroke="#f4f4f4" stroke-width="0.45">0,27</text>
<text transform="translate(669.30,784.97) scale(0.47,1)" font-size="16.5" fill="#f4f4f4" stroke="#f4f4f4" stroke-width="0.45">0,43</text>
<text transform="translate(697.70,784.97) scale(0.47,1)" font-size="16.5" fill="#f4f4f4" stroke="#f4f4f4" stroke-width="0.45">0,25</text>
<text transform="translate(742.50,784.97) scale(0.47,1)" font-size="16.5" fill="#f4f4f4" stroke="#f4f4f4" stroke-width="0.45">0,36</text>
<text transform="translate(790.00,784.97) scale(0.47,1)" font-size="16.5" fill="#f4f4f4" stroke="#f4f4f4" stroke-width="0.45">0,41</text>
<text transform="translate(819.20,784.97) scale(0.47,1)" font-size="16.5" fill="#f4f4f4" stroke="#f4f4f4" stroke-width="0.45">0,19</text>
<text transform="translate(868.20,784.97) scale(0.47,1)" font-size="16.5" fill="#f4f4f4" stroke="#f4f4f4" stroke-width="0.45">0,31</text>
<text transform="translate(920.80,784.97) scale(0.47,1)" font-size="16.5" fill="#f4f4f4" stroke="#f4f4f4" stroke-width="0.45">0,22</text>
<text transform="translate(947.20,784.97) scale(0.47,1)" font-size="16.5" fill="#f4f4f4" stroke="#f4f4f4" stroke-width="0.45">0,49</text>
<text transform="translate(996.30,784.97) scale(0.47,1)" font-size="16.5" fill="#f4f4f4" stroke="#f4f4f4" stroke-width="0.45">0,44</text>
<text transform="translate(1049.30,784.97) scale(0.47,1)" font-size="16.5" fill="#f4f4f4" stroke="#f4f4f4" stroke-width="0.45">0,14</text>
<text transform="translate(1073.80,784.97) scale(0.47,1)" font-size="16.5" fill="#f4f4f4" stroke="#f4f4f4" stroke-width="0.45">0,49</text>
<text transform="translate(1099.60,784.97) scale(0.47,1)" font-size="16.5" fill="#f4f4f4" stroke="#f4f4f4" stroke-width="0.45">0,32</text>
<text transform="translate(1124.30,784.97) scale(0.47,1)" font-size="16.5" fill="#f4f4f4" stroke="#f4f4f4" stroke-width="0.45">0,47</text>
<text transform="translate(1153.80,784.97) scale(0.47,1)" font-size="16.5" fill="#f4f4f4" stroke="#f4f4f4" stroke-width="0.45">0,25</text>
<text transform="translate(1188.20,784.97) scale(0.47,1)" font-size="16.5" fill="#f4f4f4" stroke="#f4f4f4" stroke-width="0.45">0,27</text>
<text transform="translate(1213.40,784.97) scale(0.47,1)" font-size="16.5" fill="#f4f4f4" stroke="#f4f4f4" stroke-width="0.45">0,33</text>
<text transform="translate(1251.20,784.97) scale(0.47,1)" font-size="16.5" fill="#f4f4f4" stroke="#f4f4f4" stroke-width="0.45">0,60</text>
<text transform="translate(1296.70,784.97) scale(0.47,1)" font-size="16.5" fill="#f4f4f4" stroke="#f4f4f4" stroke-width="0.45">0,06</text>
<text transform="translate(1337.00,784.97) scale(0.47,1)" font-size="16.5" fill="#f4f4f4" stroke="#f4f4f4" stroke-width="0.45">0,33</text>
<text transform="translate(1378.10,784.97) scale(0.47,1)" font-size="16.5" fill="#f4f4f4" stroke="#f4f4f4" stroke-width="0.45">0,15</text>
<text transform="translate(1433.90,784.97) scale(0.47,1)" font-size="16.5" fill="#f4f4f4" stroke="#f4f4f4" stroke-width="0.45">0,51</text>
<text x="334.00" y="811.51" font-size="16.5" fill="#f4f4f4" stroke="#f4f4f4" stroke-width="0.22" textLength="30.00" lengthAdjust="spacingAndGlyphs">Target Y</text>
<text transform="translate(391.20,811.51) scale(0.47,1)" font-size="16.5" fill="#f4f4f4" stroke="#f4f4f4" stroke-width="0.45">339,31</text>
<text transform="translate(420.40,811.51) scale(0.47,1)" font-size="16.5" fill="#f4f4f4" stroke="#f4f4f4" stroke-width="0.45">268,50</text>
<text transform="translate(450.70,811.51) scale(0.47,1)" font-size="16.5" fill="#f4f4f4" stroke="#f4f4f4" stroke-width="0.45">216,34</text>
<text transform="translate(481.20,811.51) scale(0.47,1)" font-size="16.5" fill="#f4f4f4" stroke="#f4f4f4" stroke-width="0.45">166,61</text>
<text transform="translate(511.80,811.51) scale(0.47,1)" font-size="16.5" fill="#f4f4f4" stroke="#f4f4f4" stroke-width="0.45">116,02</text>
<text transform="translate(541.80,811.51) scale(0.47,1)" font-size="16.5" fill="#f4f4f4" stroke="#f4f4f4" stroke-width="0.45">0,00</text>
<text transform="translate(563.80,811.51) scale(0.47,1)" font-size="16.5" fill="#f4f4f4" stroke="#f4f4f4" stroke-width="0.45">34,18</text>
<text transform="translate(600.20,811.51) scale(0.47,1)" font-size="16.5" fill="#f4f4f4" stroke="#f4f4f4" stroke-width="0.45">118,40</text>
<text transform="translate(636.60,811.51) scale(0.47,1)" font-size="16.5" fill="#f4f4f4" stroke="#f4f4f4" stroke-width="0.45">63,45</text>
<text transform="translate(669.30,811.51) scale(0.47,1)" font-size="16.5" fill="#f4f4f4" stroke="#f4f4f4" stroke-width="0.45">44,22</text>
<text transform="translate(697.70,811.51) scale(0.47,1)" font-size="16.5" fill="#f4f4f4" stroke="#f4f4f4" stroke-width="0.45">79,12</text>
<text transform="translate(742.50,811.51) scale(0.47,1)" font-size="16.5" fill="#f4f4f4" stroke="#f4f4f4" stroke-width="0.45">142,08</text>
<text transform="translate(790.00,811.51) scale(0.47,1)" font-size="16.5" fill="#f4f4f4" stroke="#f4f4f4" stroke-width="0.45">96,19</text>
<text transform="translate(819.20,811.51) scale(0.47,1)" font-size="16.5" fill="#f4f4f4" stroke="#f4f4f4" stroke-width="0.45">39,88</text>
<text transform="translate(868.20,811.51) scale(0.47,1)" font-size="16.5" fill="#f4f4f4" stroke="#f4f4f4" stroke-width="0.45">63,37</text>
<text transform="translate(920.80,811.51) scale(0.47,1)" font-size="16.5" fill="#f4f4f4" stroke="#f4f4f4" stroke-width="0.45">22,65</text>
<text transform="translate(947.20,811.51) scale(0.47,1)" font-size="16.5" fill="#f4f4f4" stroke="#f4f4f4" stroke-width="0.45">145,08</text>
<text transform="translate(996.30,811.51) scale(0.47,1)" font-size="16.5" fill="#f4f4f4" stroke="#f4f4f4" stroke-width="0.45">144,25</text>
<text transform="translate(1049.30,811.51) scale(0.47,1)" font-size="16.5" fill="#f4f4f4" stroke="#f4f4f4" stroke-width="0.45">21,18</text>
<text transform="translate(1073.80,811.51) scale(0.47,1)" font-size="16.5" fill="#f4f4f4" stroke="#f4f4f4" stroke-width="0.45">77,95</text>
<text transform="translate(1099.60,811.51) scale(0.47,1)" font-size="16.5" fill="#f4f4f4" stroke="#f4f4f4" stroke-width="0.45">39,57</text>
<text transform="translate(1124.30,811.51) scale(0.47,1)" font-size="16.5" fill="#f4f4f4" stroke="#f4f4f4" stroke-width="0.45">200,07</text>
<text transform="translate(1153.80,811.51) scale(0.47,1)" font-size="16.5" fill="#f4f4f4" stroke="#f4f4f4" stroke-width="0.45">63,88</text>
<text transform="translate(1188.20,811.51) scale(0.47,1)" font-size="16.5" fill="#f4f4f4" stroke="#f4f4f4" stroke-width="0.45">65,89</text>
<text transform="translate(1213.40,811.51) scale(0.47,1)" font-size="16.5" fill="#f4f4f4" stroke="#f4f4f4" stroke-width="0.45">72,16</text>
<text transform="translate(1251.20,811.51) scale(0.47,1)" font-size="16.5" fill="#f4f4f4" stroke="#f4f4f4" stroke-width="0.45">242,66</text>
<text transform="translate(1296.70,811.51) scale(0.47,1)" font-size="16.5" fill="#f4f4f4" stroke="#f4f4f4" stroke-width="0.45">24,49</text>
<text transform="translate(1337.00,811.51) scale(0.47,1)" font-size="16.5" fill="#f4f4f4" stroke="#f4f4f4" stroke-width="0.45">267,15</text>
<text transform="translate(1378.10,811.51) scale(0.47,1)" font-size="16.5" fill="#f4f4f4" stroke="#f4f4f4" stroke-width="0.45">96,65</text>
<text transform="translate(1433.90,811.51) scale(0.47,1)" font-size="16.5" fill="#f4f4f4" stroke="#f4f4f4" stroke-width="0.45">314,82</text>
<text x="334.00" y="838.06" font-size="16.5" fill="#f4f4f4" stroke="#f4f4f4" stroke-width="0.22" textLength="30.80" lengthAdjust="spacingAndGlyphs">ΔE 2000</text>
<text transform="translate(391.20,838.06) scale(0.47,1)" font-size="16.5" fill="#f4f4f4" stroke="#f4f4f4" stroke-width="0.45">1,13</text>
<text transform="translate(420.40,838.06) scale(0.47,1)" font-size="16.5" fill="#f4f4f4" stroke="#f4f4f4" stroke-width="0.45">0,30</text>
<text transform="translate(450.70,838.06) scale(0.47,1)" font-size="16.5" fill="#f4f4f4" stroke="#f4f4f4" stroke-width="0.45">0,82</text>
<text transform="translate(481.20,838.06) scale(0.47,1)" font-size="16.5" fill="#f4f4f4" stroke="#f4f4f4" stroke-width="0.45">0,72</text>
<text transform="translate(511.80,838.06) scale(0.47,1)" font-size="16.5" fill="#f4f4f4" stroke="#f4f4f4" stroke-width="0.45">0,68</text>
<text transform="translate(541.80,838.06) scale(0.47,1)" font-size="16.5" fill="#f4f4f4" stroke="#f4f4f4" stroke-width="0.45">0,71</text>
<text transform="translate(563.80,838.06) scale(0.47,1)" font-size="16.5" fill="#f4f4f4" stroke="#f4f4f4" stroke-width="0.45">0,99</text>
<text transform="translate(600.20,838.06) scale(0.47,1)" font-size="16.5" fill="#f4f4f4" stroke="#f4f4f4" stroke-width="0.45">0,84</text>
<text transform="translate(636.60,838.06) scale(0.47,1)" font-size="16.5" fill="#f4f4f4" stroke="#f4f4f4" stroke-width="0.45">1,53</text>
<text transform="translate(669.30,838.06) scale(0.47,1)" font-size="16.5" fill="#f4f4f4" stroke="#f4f4f4" stroke-width="0.45">1,46</text>
<text transform="translate(697.70,838.06) scale(0.47,1)" font-size="16.5" fill="#f4f4f4" stroke="#f4f4f4" stroke-width="0.45">1,24</text>
<text transform="translate(742.50,838.06) scale(0.47,1)" font-size="16.5" fill="#f4f4f4" stroke="#f4f4f4" stroke-width="0.45">1,44</text>
<text transform="translate(790.00,838.06) scale(0.47,1)" font-size="16.5" fill="#f4f4f4" stroke="#f4f4f4" stroke-width="0.45">2,42</text>
<text transform="translate(819.20,838.06) scale(0.47,1)" font-size="16.5" fill="#f4f4f4" stroke="#f4f4f4" stroke-width="0.45">1,60</text>
<text transform="translate(868.20,838.06) scale(0.47,1)" font-size="16.5" fill="#f4f4f4" stroke="#f4f4f4" stroke-width="0.45">1,23</text>
<text transform="translate(920.80,838.06) scale(0.47,1)" font-size="16.5" fill="#f4f4f4" stroke="#f4f4f4" stroke-width="0.45">1,46</text>
<text transform="translate(947.20,838.06) scale(0.47,1)" font-size="16.5" fill="#f4f4f4" stroke="#f4f4f4" stroke-width="0.45">1,92</text>
<text transform="translate(996.30,838.06) scale(0.47,1)" font-size="16.5" fill="#f4f4f4" stroke="#f4f4f4" stroke-width="0.45">2,23</text>
<text transform="translate(1049.30,838.06) scale(0.47,1)" font-size="16.5" fill="#f4f4f4" stroke="#f4f4f4" stroke-width="0.45">2,10</text>
<text transform="translate(1073.80,838.06) scale(0.47,1)" font-size="16.5" fill="#f4f4f4" stroke="#f4f4f4" stroke-width="0.45">1,82</text>
<text transform="translate(1099.60,838.06) scale(0.47,1)" font-size="16.5" fill="#f4f4f4" stroke="#f4f4f4" stroke-width="0.45">1,41</text>
<text transform="translate(1124.30,838.06) scale(0.47,1)" font-size="16.5" fill="#f4f4f4" stroke="#f4f4f4" stroke-width="0.45">2,41</text>
<text transform="translate(1153.80,838.06) scale(0.47,1)" font-size="16.5" fill="#f4f4f4" stroke="#f4f4f4" stroke-width="0.45">1,34</text>
<text transform="translate(1188.20,838.06) scale(0.47,1)" font-size="16.5" fill="#f4f4f4" stroke="#f4f4f4" stroke-width="0.45">1,45</text>
<text transform="translate(1213.40,838.06) scale(0.47,1)" font-size="16.5" fill="#f4f4f4" stroke="#f4f4f4" stroke-width="0.45">4,15</text>
<text transform="translate(1251.20,838.06) scale(0.47,1)" font-size="16.5" fill="#f4f4f4" stroke="#f4f4f4" stroke-width="0.45">2,33</text>
<text transform="translate(1296.70,838.06) scale(0.47,1)" font-size="16.5" fill="#f4f4f4" stroke="#f4f4f4" stroke-width="0.45">3,20</text>
<text transform="translate(1337.00,838.06) scale(0.47,1)" font-size="16.5" fill="#f4f4f4" stroke="#f4f4f4" stroke-width="0.45">1,53</text>
<text transform="translate(1378.10,838.06) scale(0.47,1)" font-size="16.5" fill="#f4f4f4" stroke="#f4f4f4" stroke-width="0.45">1,37</text>
<text transform="translate(1433.90,838.06) scale(0.47,1)" font-size="16.5" fill="#f4f4f4" stroke="#f4f4f4" stroke-width="0.45">2,50</text>
<clipPath id="hs"><path d="M1183.96 575.03 L1183.96 575.03 L1183.95 575.03 L1183.95 575.03 L1183.94 575.02 L1183.93 575.02 L1183.93 575.02 L1183.92 575.02 L1183.91 575.02 L1183.90 575.03 L1183.88 575.03 L1183.87 575.03 L1183.86 575.04 L1183.84 575.04 L1183.83 575.05 L1183.81 575.06 L1183.80 575.06 L1183.78 575.07 L1183.76 575.08 L1183.75 575.08 L1183.73 575.09 L1183.71 575.09 L1183.70 575.09 L1183.69 575.09 L1183.67 575.09 L1183.66 575.09 L1183.64 575.09 L1183.63 575.08 L1183.61 575.08 L1183.59 575.08 L1183.57 575.09 L1183.55 575.09 L1183.53 575.10 L1183.51 575.10 L1183.49 575.11 L1183.46 575.12 L1183.44 575.12 L1183.41 575.13 L1183.39 575.14 L1183.36 575.14 L1183.34 575.15 L1183.32 575.15 L1183.30 575.15 L1183.27 575.15 L1183.25 575.15 L1183.23 575.15 L1183.21 575.15 L1183.18 575.15 L1183.16 575.15 L1183.13 575.15 L1183.11 575.15 L1183.08 575.15 L1183.05 575.15 L1183.02 575.15 L1182.99 575.15 L1182.96 575.15 L1182.93 575.15 L1182.90 575.15 L1182.86 575.15 L1182.83 575.15 L1182.80 575.15 L1182.76 575.15 L1182.73 575.15 L1182.69 575.15 L1182.65 575.15 L1182.62 575.16 L1182.58 575.16 L1182.54 575.16 L1182.50 575.16 L1182.45 575.15 L1182.41 575.15 L1182.36 575.14 L1182.31 575.13 L1182.27 575.11 L1182.22 575.10 L1182.16 575.08 L1182.11 575.07 L1182.05 575.04 L1181.99 575.02 L1181.93 575.00 L1181.86 574.97 L1181.79 574.94 L1181.72 574.90 L1181.64 574.87 L1181.55 574.83 L1181.47 574.79 L1181.38 574.75 L1181.29 574.70 L1181.20 574.65 L1181.10 574.60 L1181.01 574.55 L1180.91 574.50 L1180.81 574.44 L1180.71 574.38 L1180.61 574.32 L1180.51 574.26 L1180.40 574.20 L1180.29 574.13 L1180.17 574.06 L1180.05 573.98 L1179.92 573.90 L1179.78 573.81 L1179.64 573.72 L1179.50 573.63 L1179.35 573.54 L1179.20 573.44 L1179.04 573.33 L1178.87 573.23 L1178.71 573.12 L1178.54 573.00 L1178.36 572.89 L1178.19 572.77 L1178.01 572.64 L1177.83 572.51 L1177.65 572.38 L1177.46 572.25 L1177.26 572.11 L1177.06 571.97 L1176.86 571.82 L1176.64 571.67 L1176.42 571.52 L1176.19 571.36 L1175.96 571.21 L1175.73 571.05 L1175.48 570.88 L1175.24 570.72 L1174.98 570.55 L1174.71 570.37 L1174.44 570.18 L1174.15 569.99 L1173.86 569.80 L1173.55 569.59 L1173.23 569.38 L1172.90 569.16 L1172.56 568.94 L1172.22 568.71 L1171.86 568.48 L1171.50 568.24 L1171.13 567.99 L1170.75 567.74 L1170.36 567.48 L1169.96 567.21 L1169.56 566.94 L1169.15 566.67 L1168.73 566.39 L1168.30 566.11 L1167.86 565.81 L1167.42 565.50 L1166.96 565.19 L1166.49 564.85 L1166.00 564.50 L1165.51 564.15 L1165.00 563.78 L1164.49 563.40 L1163.96 563.02 L1163.42 562.62 L1162.87 562.20 L1162.31 561.77 L1161.74 561.32 L1161.16 560.84 L1160.56 560.34 L1159.96 559.83 L1159.35 559.33 L1158.73 558.81 L1158.11 558.27 L1157.47 557.72 L1156.81 557.13 L1156.14 556.50 L1155.44 555.82 L1154.71 555.08 L1153.95 554.28 L1153.17 553.43 L1152.36 552.55 L1151.53 551.63 L1150.68 550.67 L1149.81 549.66 L1148.91 548.59 L1147.99 547.46 L1147.05 546.26 L1146.08 544.99 L1145.09 543.64 L1144.07 542.23 L1143.03 540.77 L1141.98 539.27 L1140.89 537.70 L1139.79 536.06 L1138.65 534.33 L1137.49 532.52 L1136.30 530.59 L1135.07 528.56 L1133.81 526.40 L1132.53 524.13 L1131.21 521.79 L1129.87 519.36 L1128.50 516.84 L1127.09 514.20 L1125.66 511.45 L1124.19 508.58 L1122.69 505.57 L1121.16 502.42 L1119.59 499.11 L1117.97 495.67 L1116.29 492.12 L1114.58 488.44 L1112.82 484.64 L1111.04 480.70 L1109.24 476.61 L1107.43 472.37 L1105.62 467.98 L1103.81 463.42 L1102.01 458.68 L1100.22 453.77 L1098.41 448.69 L1096.59 443.45 L1094.75 438.05 L1092.92 432.50 L1091.09 426.80 L1089.27 420.96 L1087.46 414.98 L1085.67 408.86 L1083.90 402.62 L1082.13 396.21 L1080.34 389.59 L1078.55 382.80 L1076.76 375.86 L1075.00 368.80 L1073.26 361.65 L1071.57 354.43 L1069.93 347.17 L1068.36 339.90 L1066.87 332.65 L1065.44 325.35 L1064.03 317.92 L1062.66 310.41 L1061.34 302.84 L1060.08 295.25 L1058.89 287.66 L1057.77 280.10 L1056.74 272.60 L1055.81 265.20 L1054.98 257.92 L1054.23 250.71 L1053.55 243.50 L1052.94 236.32 L1052.41 229.19 L1051.97 222.12 L1051.63 215.14 L1051.39 208.27 L1051.27 201.53 L1051.27 194.94 L1051.40 188.53 L1051.65 182.24 L1052.02 176.03 L1052.49 169.90 L1053.07 163.89 L1053.77 158.03 L1054.58 152.32 L1055.51 146.80 L1056.55 141.48 L1057.71 136.40 L1059.00 131.57 L1060.42 126.95 L1061.98 122.50 L1063.67 118.24 L1065.48 114.17 L1067.40 110.31 L1069.43 106.67 L1071.54 103.26 L1073.73 100.09 L1075.99 97.18 L1078.31 94.54 L1080.72 92.19 L1083.24 90.13 L1085.87 88.33 L1088.58 86.77 L1091.37 85.45 L1094.21 84.33 L1097.10 83.40 L1100.02 82.64 L1102.96 82.02 L1105.90 81.54 L1108.86 81.25 L1111.88 81.20 L1114.95 81.36 L1118.05 81.71 L1121.19 82.22 L1124.34 82.85 L1127.51 83.57 L1130.67 84.37 L1133.83 85.19 L1136.97 86.03 L1140.12 86.91 L1143.28 87.91 L1146.46 89.01 L1149.64 90.18 L1152.83 91.43 L1156.01 92.72 L1159.17 94.04 L1162.32 95.39 L1165.44 96.73 L1168.52 98.07 L1171.58 99.40 L1174.61 100.77 L1177.62 102.16 L1180.61 103.58 L1183.59 105.02 L1186.55 106.48 L1189.50 107.96 L1192.44 109.45 L1195.36 110.96 L1198.29 112.49 L1201.19 114.03 L1204.09 115.59 L1206.96 117.17 L1209.83 118.77 L1212.68 120.38 L1215.53 122.01 L1218.37 123.66 L1221.21 125.32 L1224.05 127.00 L1226.89 128.70 L1229.73 130.41 L1232.57 132.14 L1235.40 133.89 L1238.22 135.65 L1241.05 137.43 L1243.87 139.22 L1246.69 141.03 L1249.50 142.85 L1252.31 144.68 L1255.12 146.51 L1257.93 148.36 L1260.73 150.23 L1263.53 152.10 L1266.32 153.99 L1269.11 155.89 L1271.90 157.80 L1274.69 159.72 L1277.48 161.65 L1280.27 163.59 L1283.06 165.53 L1285.85 167.48 L1288.64 169.44 L1291.42 171.40 L1294.21 173.38 L1297.00 175.37 L1299.78 177.36 L1302.57 179.36 L1305.36 181.36 L1308.15 183.37 L1310.94 185.39 L1313.73 187.41 L1316.53 189.44 L1319.33 191.48 L1322.13 193.52 L1324.93 195.57 L1327.73 197.62 L1330.53 199.68 L1333.33 201.74 L1336.13 203.80 L1338.92 205.87 L1341.71 207.93 L1344.50 210.00 L1347.28 212.08 L1350.07 214.16 L1352.86 216.25 L1355.64 218.33 L1358.42 220.42 L1361.20 222.50 L1363.98 224.59 L1366.75 226.67 L1369.53 228.76 L1372.31 230.84 L1375.09 232.93 L1377.86 235.02 L1380.64 237.10 L1383.41 239.19 L1386.18 241.28 L1388.94 243.36 L1391.69 245.44 L1394.43 247.51 L1397.17 249.59 L1399.90 251.66 L1402.63 253.74 L1405.36 255.81 L1408.07 257.88 L1410.78 259.94 L1413.49 262.00 L1416.18 264.06 L1418.87 266.11 L1421.54 268.15 L1424.21 270.18 L1426.87 272.21 L1429.53 274.24 L1432.17 276.27 L1434.81 278.28 L1437.44 280.30 L1440.06 282.30 L1442.66 284.29 L1445.26 286.28 L1447.84 288.25 L1450.41 290.22 L1452.97 292.18 L1455.52 294.13 L1458.06 296.08 L1460.59 298.01 L1463.11 299.94 L1465.61 301.85 L1468.09 303.75 L1470.56 305.64 L1473.01 307.52 L1475.45 309.38 L1477.88 311.23 L1480.29 313.07 L1482.69 314.90 L1485.08 316.71 L1487.44 318.52 L1489.79 320.30 L1492.11 322.08 L1494.41 323.83 L1496.69 325.57 L1498.94 327.30 L1501.18 329.01 L1503.40 330.72 L1505.59 332.41 L1507.77 334.08 L1509.92 335.74 L1512.05 337.37 L1514.14 338.98 L1516.21 340.56 L1518.24 342.12 L1520.24 343.65 L1522.21 345.16 L1524.14 346.64 L1526.05 348.10 L1527.93 349.54 L1529.79 350.95 L1531.62 352.35 L1533.43 353.73 L1535.22 355.10 L1536.99 356.45 L1538.74 357.79 L1540.47 359.12 L1542.19 360.43 L1543.88 361.72 L1545.55 363.00 L1547.19 364.25 L1548.81 365.49 L1550.39 366.70 L1551.95 367.88 L1553.47 369.05 L1554.97 370.18 L1556.43 371.29 L1557.87 372.38 L1559.27 373.45 L1560.65 374.49 L1562.00 375.51 L1563.33 376.52 L1564.63 377.51 L1565.91 378.47 L1567.16 379.43 L1568.39 380.36 L1569.58 381.28 L1570.75 382.18 L1571.90 383.06 L1573.02 383.92 L1574.12 384.76 L1575.19 385.58 L1576.24 386.39 L1577.27 387.18 L1578.28 387.96 L1579.26 388.71 L1580.22 389.45 L1581.16 390.17 L1582.07 390.87 L1582.96 391.55 L1583.83 392.22 L1584.68 392.87 L1585.52 393.51 L1586.34 394.14 L1587.14 394.75 L1587.93 395.35 L1588.69 395.93 L1589.44 396.50 L1590.17 397.05 L1590.88 397.59 L1591.57 398.11 L1592.25 398.63 L1592.92 399.13 L1593.57 399.63 L1594.21 400.12 L1594.84 400.60 L1595.45 401.07 L1596.05 401.52 L1596.63 401.97 L1597.20 402.40 L1597.75 402.83 L1598.30 403.25 L1598.84 403.66 L1599.37 404.07 L1599.89 404.47 L1600.41 404.87 L1600.91 405.25 L1601.41 405.63 L1601.89 406.01 L1602.37 406.37 L1602.84 406.73 L1603.30 407.09 L1603.75 407.43 L1604.20 407.77 L1604.63 408.11 L1605.06 408.43 L1605.48 408.75 L1605.89 409.07 L1606.29 409.38 L1606.68 409.68 L1607.06 409.97 L1607.44 410.26 L1607.80 410.54 L1608.17 410.82 L1608.52 411.09 L1608.86 411.35 L1609.20 411.60 L1609.53 411.85 L1609.86 412.09 L1610.17 412.32 L1610.48 412.55 L1610.78 412.77 L1611.07 412.99 L1611.35 413.20 L1611.63 413.41 L1611.90 413.61 L1612.15 413.81 L1612.40 414.00 L1612.64 414.18 L1612.88 414.36 L1613.10 414.54 L1613.33 414.71 L1613.54 414.88 L1613.75 415.04 L1613.96 415.20 L1614.16 415.35 L1614.36 415.50 L1614.55 415.65 L1614.74 415.79 L1614.92 415.93 L1615.09 416.07 L1615.26 416.20 L1615.43 416.32 L1615.59 416.45 L1615.75 416.57 L1615.90 416.69 L1616.05 416.80 L1616.19 416.91 L1616.33 417.02 L1616.47 417.12 L1616.60 417.22 L1616.72 417.32 L1616.84 417.41 L1616.96 417.50 L1617.07 417.58 L1617.17 417.66 L1617.27 417.74 L1617.37 417.81 L1617.45 417.88 L1617.54 417.94 L1617.62 418.00 L1617.69 418.06 L1617.77 418.12 L1617.85 418.18 L1617.92 418.24 L1618.00 418.30 L1618.08 418.35 L1618.15 418.41 L1618.22 418.47 L1618.29 418.52 L1618.36 418.57 L1618.43 418.63 L1618.50 418.68 L1618.56 418.73 L1618.62 418.77 L1618.69 418.82 L1618.74 418.86 L1618.80 418.91 L1618.85 418.95 L1618.91 418.99 L1618.96 419.03 L1619.01 419.07 L1619.06 419.11 L1619.11 419.15 L1619.17 419.19 L1619.22 419.23 L1619.27 419.27 L1619.32 419.31 L1619.38 419.35 L1619.43 419.39 L1619.48 419.43 L1619.53 419.47 L1619.59 419.51 L1619.65 419.56 L1619.71 419.61 L1619.78 419.66 L1619.86 419.72 L1619.95 419.79 L1620.03 419.85 L1620.12 419.92 L1620.21 419.99 L1620.29 420.05 L1620.37 420.11 L1620.43 420.16 L1620.49 420.20 L1620.54 420.24 L1620.58 420.27 L1620.61 420.29 L1620.63 420.31 L1620.66 420.33 L1620.67 420.34 L1620.69 420.35 L1620.70 420.36 L1620.71 420.37 L1620.72 420.38 Z"/></clipPath>
<g clip-path="url(#hs)">
<rect x="1048" y="78" width="655" height="500" fill="url(#fbC)"/>
<path d="M1281.8 221.3 L1546.2 381.8 L1712 381.8 L1712 78 L1321.8 78 Z" fill="url(#fbA)"/>
<path d="M1165.2 542.3 L1546.2 381.8 L1712 381.8 L1712 600 L1165.2 600 Z" fill="url(#fbB)"/>
<path d="M1546.2 381.8 L1281.8 221.3 L1165.2 542.3 Z" fill="#f4f4f4"/>
<path d="M1546.2 381.8 L1281.8 221.3 L1165.2 542.3 Z" fill="url(#fbR)"/><path d="M1546.2 381.8 L1281.8 221.3 L1165.2 542.3 Z" fill="url(#fbG)"/><path d="M1546.2 381.8 L1281.8 221.3 L1165.2 542.3 Z" fill="url(#fbBl)"/><path d="M1546.2 381.8 L1281.8 221.3 L1165.2 542.3 Z" fill="url(#fbW)"/>
</g>
<rect x="1505.4" y="85" width="190.3" height="147.7" fill="url(#inU)"/>
<path d="M1505.4 101.5 L1695.7 217.5 L1695.7 232.7 L1505.4 232.7 Z" fill="url(#inL)"/>
<defs><linearGradient id="bg0" x1="0" y1="0" x2="1" y2="0"><stop offset="0" stop-color="#ffff59"/><stop offset="0.22" stop-color="#ffff00"/><stop offset="0.55" stop-color="#ffff00"/><stop offset="1" stop-color="#737300"/></linearGradient><linearGradient id="bg1" x1="0" y1="0" x2="1" y2="0"><stop offset="0" stop-color="#ff59ff"/><stop offset="0.22" stop-color="#ff00ff"/><stop offset="0.55" stop-color="#ff00ff"/><stop offset="1" stop-color="#730073"/></linearGradient><linearGradient id="bg2" x1="0" y1="0" x2="1" y2="0"><stop offset="0" stop-color="#59ffff"/><stop offset="0.22" stop-color="#00ffff"/><stop offset="0.55" stop-color="#00ffff"/><stop offset="1" stop-color="#007373"/></linearGradient><linearGradient id="bg3" x1="0" y1="0" x2="1" y2="0"><stop offset="0" stop-color="#5959ff"/><stop offset="0.22" stop-color="#0000ff"/><stop offset="0.55" stop-color="#0000ff"/><stop offset="1" stop-color="#000073"/></linearGradient><linearGradient id="bg4" x1="0" y1="0" x2="1" y2="0"><stop offset="0" stop-color="#59ff59"/><stop offset="0.22" stop-color="#00ff00"/><stop offset="0.55" stop-color="#00ff00"/><stop offset="1" stop-color="#007300"/></linearGradient><linearGradient id="bg5" x1="0" y1="0" x2="1" y2="0"><stop offset="0" stop-color="#ff5959"/><stop offset="0.22" stop-color="#ff0000"/><stop offset="0.55" stop-color="#ff0000"/><stop offset="1" stop-color="#730000"/></linearGradient><linearGradient id="bg6" x1="0" y1="0" x2="1" y2="0"><stop offset="0" stop-color="#5eb7cd"/><stop offset="0.22" stop-color="#0890b2"/><stop offset="0.55" stop-color="#0890b2"/><stop offset="1" stop-color="#044150"/></linearGradient><linearGradient id="bg7" x1="0" y1="0" x2="1" y2="0"><stop offset="0" stop-color="#d68dbd"/><stop offset="0.22" stop-color="#c0509a"/><stop offset="0.55" stop-color="#c0509a"/><stop offset="1" stop-color="#562445"/></linearGradient><linearGradient id="bg8" x1="0" y1="0" x2="1" y2="0"><stop offset="0" stop-color="#f7db6d"/><stop offset="0.22" stop-color="#f2c81e"/><stop offset="0.55" stop-color="#f2c81e"/><stop offset="1" stop-color="#6d5a0e"/></linearGradient><linearGradient id="bg9" x1="0" y1="0" x2="1" y2="0"><stop offset="0" stop-color="#d17883"/><stop offset="0.22" stop-color="#b83040"/><stop offset="0.55" stop-color="#b83040"/><stop offset="1" stop-color="#53161d"/></linearGradient><linearGradient id="bg10" x1="0" y1="0" x2="1" y2="0"><stop offset="0" stop-color="#8bc18d"/><stop offset="0.22" stop-color="#4ca050"/><stop offset="0.55" stop-color="#4ca050"/><stop offset="1" stop-color="#224824"/></linearGradient><linearGradient id="bg11" x1="0" y1="0" x2="1" y2="0"><stop offset="0" stop-color="#8088c3"/><stop offset="0.22" stop-color="#3c48a2"/><stop offset="0.55" stop-color="#3c48a2"/><stop offset="1" stop-color="#1b2049"/></linearGradient><linearGradient id="bg12" x1="0" y1="0" x2="1" y2="0"><stop offset="0" stop-color="#f1c57c"/><stop offset="0.22" stop-color="#eaa636"/><stop offset="0.55" stop-color="#eaa636"/><stop offset="1" stop-color="#694b18"/></linearGradient><linearGradient id="bg13" x1="0" y1="0" x2="1" y2="0"><stop offset="0" stop-color="#c3d789"/><stop offset="0.22" stop-color="#a2c24a"/><stop offset="0.55" stop-color="#a2c24a"/><stop offset="1" stop-color="#495721"/></linearGradient><linearGradient id="bg14" x1="0" y1="0" x2="1" y2="0"><stop offset="0" stop-color="#9985a6"/><stop offset="0.22" stop-color="#624476"/><stop offset="0.55" stop-color="#624476"/><stop offset="1" stop-color="#2c1f35"/></linearGradient><linearGradient id="bg15" x1="0" y1="0" x2="1" y2="0"><stop offset="0" stop-color="#d78f9a"/><stop offset="0.22" stop-color="#c25264"/><stop offset="0.55" stop-color="#c25264"/><stop offset="1" stop-color="#57252d"/></linearGradient><linearGradient id="bg16" x1="0" y1="0" x2="1" y2="0"><stop offset="0" stop-color="#8996cd"/><stop offset="0.22" stop-color="#4a5eb2"/><stop offset="0.55" stop-color="#4a5eb2"/><stop offset="1" stop-color="#212a50"/></linearGradient><linearGradient id="bg17" x1="0" y1="0" x2="1" y2="0"><stop offset="0" stop-color="#edae7a"/><stop offset="0.22" stop-color="#e48232"/><stop offset="0.55" stop-color="#e48232"/><stop offset="1" stop-color="#673a16"/></linearGradient><linearGradient id="bg18" x1="0" y1="0" x2="1" y2="0"><stop offset="0" stop-color="#9cd6c6"/><stop offset="0.22" stop-color="#66c0a8"/><stop offset="0.55" stop-color="#66c0a8"/><stop offset="1" stop-color="#2e564c"/></linearGradient><linearGradient id="bg19" x1="0" y1="0" x2="1" y2="0"><stop offset="0" stop-color="#aeb2d7"/><stop offset="0.22" stop-color="#8288c2"/><stop offset="0.55" stop-color="#8288c2"/><stop offset="1" stop-color="#3a3d57"/></linearGradient><linearGradient id="bg20" x1="0" y1="0" x2="1" y2="0"><stop offset="0" stop-color="#94a188"/><stop offset="0.22" stop-color="#5a6e48"/><stop offset="0.55" stop-color="#5a6e48"/><stop offset="1" stop-color="#283220"/></linearGradient><linearGradient id="bg21" x1="0" y1="0" x2="1" y2="0"><stop offset="0" stop-color="#99aecd"/><stop offset="0.22" stop-color="#6282b2"/><stop offset="0.55" stop-color="#6282b2"/><stop offset="1" stop-color="#2c3a50"/></linearGradient><linearGradient id="bg22" x1="0" y1="0" x2="1" y2="0"><stop offset="0" stop-color="#dabbb0"/><stop offset="0.22" stop-color="#c69686"/><stop offset="0.55" stop-color="#c69686"/><stop offset="1" stop-color="#59443c"/></linearGradient><linearGradient id="bg23" x1="0" y1="0" x2="1" y2="0"><stop offset="0" stop-color="#a99188"/><stop offset="0.22" stop-color="#7a5648"/><stop offset="0.55" stop-color="#7a5648"/><stop offset="1" stop-color="#372720"/></linearGradient><linearGradient id="bg24" x1="0" y1="0" x2="1" y2="0"><stop offset="0" stop-color="#666666"/><stop offset="0.22" stop-color="#141414"/><stop offset="0.55" stop-color="#141414"/><stop offset="1" stop-color="#090909"/></linearGradient><linearGradient id="bg25" x1="0" y1="0" x2="1" y2="0"><stop offset="0" stop-color="#c1c1c1"/><stop offset="0.22" stop-color="#a0a0a0"/><stop offset="0.55" stop-color="#a0a0a0"/><stop offset="1" stop-color="#484848"/></linearGradient><linearGradient id="bg26" x1="0" y1="0" x2="1" y2="0"><stop offset="0" stop-color="#cecece"/><stop offset="0.22" stop-color="#b4b4b4"/><stop offset="0.55" stop-color="#b4b4b4"/><stop offset="1" stop-color="#515151"/></linearGradient><linearGradient id="bg27" x1="0" y1="0" x2="1" y2="0"><stop offset="0" stop-color="#dddddd"/><stop offset="0.22" stop-color="#cacaca"/><stop offset="0.55" stop-color="#cacaca"/><stop offset="1" stop-color="#5b5b5b"/></linearGradient><linearGradient id="bg28" x1="0" y1="0" x2="1" y2="0"><stop offset="0" stop-color="#ececec"/><stop offset="0.22" stop-color="#e2e2e2"/><stop offset="0.55" stop-color="#e2e2e2"/><stop offset="1" stop-color="#666666"/></linearGradient><linearGradient id="bg29" x1="0" y1="0" x2="1" y2="0"><stop offset="0" stop-color="#ffffff"/><stop offset="0.22" stop-color="#ffffff"/><stop offset="0.55" stop-color="#ffffff"/><stop offset="1" stop-color="#737373"/></linearGradient><linearGradient id="g_DeltaL" x1="0" y1="0" x2="0" y2="1"><stop offset="0" stop-color="#ffff66"/><stop offset="0.18" stop-color="#ffff00"/><stop offset="0.48" stop-color="#ffff00"/><stop offset="0.72" stop-color="#d4d000"/><stop offset="0.88" stop-color="#a8a200"/><stop offset="1" stop-color="#6a6400"/></linearGradient><linearGradient id="g_DeltaC" x1="0" y1="0" x2="0" y2="1"><stop offset="0" stop-color="#ffff66"/><stop offset="0.18" stop-color="#ffff00"/><stop offset="0.48" stop-color="#ffff00"/><stop offset="0.72" stop-color="#d4d000"/><stop offset="0.88" stop-color="#a8a200"/><stop offset="1" stop-color="#6a6400"/></linearGradient><linearGradient id="g_DeltaH" x1="0" y1="0" x2="0" y2="1"><stop offset="0" stop-color="#ffff66"/><stop offset="0.18" stop-color="#ffff00"/><stop offset="0.48" stop-color="#ffff00"/><stop offset="0.72" stop-color="#d4d000"/><stop offset="0.88" stop-color="#a8a200"/><stop offset="1" stop-color="#6a6400"/></linearGradient><linearGradient id="fbC" gradientUnits="userSpaceOnUse" x1="0" y1="102.4" x2="0" y2="560.2"><stop offset="0" stop-color="#009900"/><stop offset="0.4" stop-color="#009340"/><stop offset="0.6" stop-color="#009494"/><stop offset="0.8" stop-color="#0045a0"/><stop offset="1" stop-color="#0000a0"/></linearGradient><linearGradient id="fbA" gradientUnits="userSpaceOnUse" x1="1281.8" y1="221.3" x2="1546.2" y2="381.8"><stop offset="0" stop-color="#149900"/><stop offset="0.35" stop-color="#7a9900"/><stop offset="0.6" stop-color="#995000"/><stop offset="1" stop-color="#990000"/></linearGradient><linearGradient id="fbB" gradientUnits="userSpaceOnUse" x1="1165.2" y1="542.3" x2="1546.2" y2="381.8"><stop offset="0" stop-color="#1a00a0"/><stop offset="0.4" stop-color="#800090"/><stop offset="0.7" stop-color="#990040"/><stop offset="1" stop-color="#990000"/></linearGradient><radialGradient id="fbW" gradientUnits="userSpaceOnUse" cx="1291.7" cy="382.4" r="60"><stop offset="0" stop-color="#ffffff" stop-opacity="1"/><stop offset="1" stop-color="#ffffff" stop-opacity="0"/></radialGradient><linearGradient id="fbR" gradientUnits="userSpaceOnUse" x1="1546.2" y1="381.8" x2="1223.5" y2="381.8"><stop offset="0" stop-color="#ff0000" stop-opacity="1"/><stop offset="0.75" stop-color="#ff0000" stop-opacity="0"/></linearGradient><linearGradient id="fbG" gradientUnits="userSpaceOnUse" x1="1281.8" y1="221.3" x2="1355.7" y2="462.1"><stop offset="0" stop-color="#00ff00" stop-opacity="1"/><stop offset="0.75" stop-color="#00ff00" stop-opacity="0"/></linearGradient><linearGradient id="fbBl" gradientUnits="userSpaceOnUse" x1="1165.2" y1="542.3" x2="1414.0" y2="301.6"><stop offset="0" stop-color="#0000ff" stop-opacity="1"/><stop offset="0.75" stop-color="#0000ff" stop-opacity="0"/></linearGradient><linearGradient id="inU" x1="0" y1="0" x2="1" y2="1"><stop offset="0" stop-color="#5a9600"/><stop offset="0.5" stop-color="#999900"/><stop offset="1" stop-color="#996a00"/></linearGradient><linearGradient id="inL" x1="0" y1="0" x2="1" y2="1"><stop offset="0" stop-color="#b4ff00"/><stop offset="0.5" stop-color="#ffff00"/><stop offset="1" stop-color="#ffb400"/></linearGradient></defs>
</svg>
<canvas id="cie" width="653" height="499" style="left:1049px;top:79px"></canvas>
<canvas id="inset" width="189" height="146" style="left:1506px;top:86px"></canvas>
<svg id="top" width="1712" height="885" viewBox="0 0 1712 885">
<rect x="1352.10" y="353.90" width="13.8" height="13.8" fill="none" stroke="#ffffff" stroke-width="1.6"/>
<rect x="1336.60" y="358.60" width="13.8" height="13.8" fill="none" stroke="#ffffff" stroke-width="1.6"/>
<rect x="1235.60" y="411.60" width="13.8" height="13.8" fill="none" stroke="#ffffff" stroke-width="1.6"/>
<rect x="1305.90" y="316.20" width="13.8" height="13.8" fill="none" stroke="#ffffff" stroke-width="1.6"/>
<rect x="1249.50" y="420.00" width="13.8" height="13.8" fill="none" stroke="#ffffff" stroke-width="1.6"/>
<rect x="1245.50" y="355.40" width="13.8" height="13.8" fill="none" stroke="#ffffff" stroke-width="1.6"/>
<rect x="1440.60" y="329.10" width="13.8" height="13.8" fill="none" stroke="#ffffff" stroke-width="1.6"/>
<rect x="1210.60" y="456.60" width="13.8" height="13.8" fill="none" stroke="#ffffff" stroke-width="1.6"/>
<rect x="1401.10" y="383.70" width="13.8" height="13.8" fill="none" stroke="#ffffff" stroke-width="1.6"/>
<rect x="1266.60" y="438.50" width="13.8" height="13.8" fill="none" stroke="#ffffff" stroke-width="1.6"/>
<rect x="1334.10" y="277.00" width="13.8" height="13.8" fill="none" stroke="#ffffff" stroke-width="1.6"/>
<rect x="1409.70" y="309.60" width="13.8" height="13.8" fill="none" stroke="#ffffff" stroke-width="1.6"/>
<rect x="1191.30" y="486.10" width="13.8" height="13.8" fill="none" stroke="#ffffff" stroke-width="1.6"/>
<rect x="1278.80" y="278.50" width="13.8" height="13.8" fill="none" stroke="#ffffff" stroke-width="1.6"/>
<rect x="1458.60" y="381.10" width="13.8" height="13.8" fill="none" stroke="#ffffff" stroke-width="1.6"/>
<rect x="1388.60" y="288.60" width="13.8" height="13.8" fill="none" stroke="#ffffff" stroke-width="1.6"/>
<rect x="1332.70" y="423.10" width="13.8" height="13.8" fill="none" stroke="#ffffff" stroke-width="1.6"/>
<rect x="1203.60" y="410.60" width="13.8" height="13.8" fill="none" stroke="#ffffff" stroke-width="1.6"/>
<rect x="1538.50" y="374.00" width="13.8" height="13.8" fill="none" stroke="#ffffff" stroke-width="1.6"/>
<rect x="1275.10" y="212.50" width="13.8" height="13.8" fill="none" stroke="#ffffff" stroke-width="1.6"/>
<rect x="1158.60" y="535.00" width="13.8" height="13.8" fill="none" stroke="#ffffff" stroke-width="1.6"/>
<rect x="1216.10" y="375.20" width="13.8" height="13.8" fill="none" stroke="#ffffff" stroke-width="1.6"/>
<rect x="1290.60" y="479.10" width="13.8" height="13.8" fill="none" stroke="#ffffff" stroke-width="1.6"/>
<rect x="1367.80" y="270.10" width="13.8" height="13.8" fill="none" stroke="#ffffff" stroke-width="1.6"/>
<rect x="1285" y="374" width="14" height="14" fill="none" stroke="#000000" stroke-width="2.4"/>
<rect x="1286.5" y="375.5" width="11" height="11" fill="none" stroke="#ffffff" stroke-width="0.8"/>
<circle cx="1365.80" cy="358.00" r="4.4" fill="#6e5048" stroke="#000000" stroke-width="1.2"/>
<circle cx="1348.00" cy="363.90" r="4.4" fill="#b89484" stroke="#000000" stroke-width="1.2"/>
<circle cx="1238.50" cy="423.80" r="4.4" fill="#6a82a8" stroke="#000000" stroke-width="1.2"/>
<circle cx="1312.80" cy="315.60" r="4.4" fill="#5a6a48" stroke="#000000" stroke-width="1.2"/>
<circle cx="1254.80" cy="430.80" r="4.4" fill="#8a8ab0" stroke="#000000" stroke-width="1.2"/>
<circle cx="1246.90" cy="360.80" r="4.4" fill="#6ab0a0" stroke="#000000" stroke-width="1.2"/>
<circle cx="1460.00" cy="331.90" r="4.4" fill="#d08038" stroke="#000000" stroke-width="1.2"/>
<circle cx="1213.00" cy="470.50" r="4.4" fill="#5a6aa8" stroke="#000000" stroke-width="1.2"/>
<circle cx="1418.00" cy="391.90" r="4.4" fill="#c05a70" stroke="#000000" stroke-width="1.2"/>
<circle cx="1273.30" cy="451.00" r="4.4" fill="#6a4a78" stroke="#000000" stroke-width="1.2"/>
<circle cx="1342.00" cy="272.50" r="4.4" fill="#9ab050" stroke="#000000" stroke-width="1.2"/>
<circle cx="1428.00" cy="311.00" r="4.4" fill="#e0a030" stroke="#000000" stroke-width="1.2"/>
<circle cx="1195.00" cy="501.00" r="4.4" fill="#4a5aa0" stroke="#000000" stroke-width="1.2"/>
<circle cx="1280.30" cy="273.60" r="4.4" fill="#5a9a5a" stroke="#000000" stroke-width="1.2"/>
<circle cx="1480.00" cy="388.80" r="4.4" fill="#b04050" stroke="#000000" stroke-width="1.2"/>
<circle cx="1403.90" cy="286.80" r="4.4" fill="#e8c030" stroke="#000000" stroke-width="1.2"/>
<circle cx="1343.90" cy="433.90" r="4.4" fill="#b05a90" stroke="#000000" stroke-width="1.2"/>
<circle cx="1205.00" cy="421.40" r="4.4" fill="#1a8a9a" stroke="#000000" stroke-width="1.2"/>
<circle cx="1557.30" cy="379.00" r="4.4" fill="#ff0000" stroke="#000000" stroke-width="1.2"/>
<circle cx="1273.40" cy="198.40" r="4.4" fill="#00ff00" stroke="#000000" stroke-width="1.2"/>
<circle cx="1165.60" cy="547.80" r="4.4" fill="#0000ff" stroke="#000000" stroke-width="1.2"/>
<circle cx="1215.90" cy="383.80" r="4.4" fill="#00ffff" stroke="#000000" stroke-width="1.2"/>
<circle cx="1301.80" cy="488.80" r="4.4" fill="#ff00ff" stroke="#000000" stroke-width="1.2"/>
<circle cx="1379.80" cy="266.10" r="4.4" fill="#ffee00" stroke="#000000" stroke-width="1.2"/>
<circle cx="1252.50" cy="416.70" r="4.4" fill="#000000" stroke="#000000" stroke-width="1.2"/>
<circle cx="1292.00" cy="380.50" r="4.4" fill="#9a9a9a" stroke="#000000" stroke-width="1.2"/>
<circle cx="1291.00" cy="381.00" r="4.4" fill="#9a9a9a" stroke="#000000" stroke-width="1.2"/>
<circle cx="1289.90" cy="381.70" r="4.4" fill="#9a9a9a" stroke="#000000" stroke-width="1.2"/>
<rect x="1503" y="83" width="196" height="152" fill="none" stroke="#2c2c2c" stroke-width="2"/>
<rect x="1505.4" y="85.0" width="190.30" height="147.70" fill="none" stroke="#9a9a9a" stroke-width="1.5"/>
<rect x="1592.8" y="151.2" width="14.4" height="14.4" fill="none" stroke="#ffffff" stroke-width="2"/>
<circle cx="1626.8" cy="105" r="4.6" fill="#ffee00" stroke="#000000" stroke-width="1.3"/>
<rect x="1418.2" y="537.9" width="280.7" height="27.7" fill="#333333"/>
<text x="1450.00" y="559.70" font-size="21.5" fill="#f2f2f2" textLength="218.00" lengthAdjust="spacingAndGlyphs" >RGB Triplet: 255, 255, 0</text>
</svg>
</div><script>
(function(){
var CX0=1048.6,CSX=777.5,CY0=578.0,CSY=594.5,K=0.6,GI=1.0;
var LP=new Path2D('M1183.96 575.03 L1183.96 575.03 L1183.95 575.03 L1183.95 575.03 L1183.94 575.02 L1183.93 575.02 L1183.93 575.02 L1183.92 575.02 L1183.91 575.02 L1183.90 575.03 L1183.88 575.03 L1183.87 575.03 L1183.86 575.04 L1183.84 575.04 L1183.83 575.05 L1183.81 575.06 L1183.80 575.06 L1183.78 575.07 L1183.76 575.08 L1183.75 575.08 L1183.73 575.09 L1183.71 575.09 L1183.70 575.09 L1183.69 575.09 L1183.67 575.09 L1183.66 575.09 L1183.64 575.09 L1183.63 575.08 L1183.61 575.08 L1183.59 575.08 L1183.57 575.09 L1183.55 575.09 L1183.53 575.10 L1183.51 575.10 L1183.49 575.11 L1183.46 575.12 L1183.44 575.12 L1183.41 575.13 L1183.39 575.14 L1183.36 575.14 L1183.34 575.15 L1183.32 575.15 L1183.30 575.15 L1183.27 575.15 L1183.25 575.15 L1183.23 575.15 L1183.21 575.15 L1183.18 575.15 L1183.16 575.15 L1183.13 575.15 L1183.11 575.15 L1183.08 575.15 L1183.05 575.15 L1183.02 575.15 L1182.99 575.15 L1182.96 575.15 L1182.93 575.15 L1182.90 575.15 L1182.86 575.15 L1182.83 575.15 L1182.80 575.15 L1182.76 575.15 L1182.73 575.15 L1182.69 575.15 L1182.65 575.15 L1182.62 575.16 L1182.58 575.16 L1182.54 575.16 L1182.50 575.16 L1182.45 575.15 L1182.41 575.15 L1182.36 575.14 L1182.31 575.13 L1182.27 575.11 L1182.22 575.10 L1182.16 575.08 L1182.11 575.07 L1182.05 575.04 L1181.99 575.02 L1181.93 575.00 L1181.86 574.97 L1181.79 574.94 L1181.72 574.90 L1181.64 574.87 L1181.55 574.83 L1181.47 574.79 L1181.38 574.75 L1181.29 574.70 L1181.20 574.65 L1181.10 574.60 L1181.01 574.55 L1180.91 574.50 L1180.81 574.44 L1180.71 574.38 L1180.61 574.32 L1180.51 574.26 L1180.40 574.20 L1180.29 574.13 L1180.17 574.06 L1180.05 573.98 L1179.92 573.90 L1179.78 573.81 L1179.64 573.72 L1179.50 573.63 L1179.35 573.54 L1179.20 573.44 L1179.04 573.33 L1178.87 573.23 L1178.71 573.12 L1178.54 573.00 L1178.36 572.89 L1178.19 572.77 L1178.01 572.64 L1177.83 572.51 L1177.65 572.38 L1177.46 572.25 L1177.26 572.11 L1177.06 571.97 L1176.86 571.82 L1176.64 571.67 L1176.42 571.52 L1176.19 571.36 L1175.96 571.21 L1175.73 571.05 L1175.48 570.88 L1175.24 570.72 L1174.98 570.55 L1174.71 570.37 L1174.44 570.18 L1174.15 569.99 L1173.86 569.80 L1173.55 569.59 L1173.23 569.38 L1172.90 569.16 L1172.56 568.94 L1172.22 568.71 L1171.86 568.48 L1171.50 568.24 L1171.13 567.99 L1170.75 567.74 L1170.36 567.48 L1169.96 567.21 L1169.56 566.94 L1169.15 566.67 L1168.73 566.39 L1168.30 566.11 L1167.86 565.81 L1167.42 565.50 L1166.96 565.19 L1166.49 564.85 L1166.00 564.50 L1165.51 564.15 L1165.00 563.78 L1164.49 563.40 L1163.96 563.02 L1163.42 562.62 L1162.87 562.20 L1162.31 561.77 L1161.74 561.32 L1161.16 560.84 L1160.56 560.34 L1159.96 559.83 L1159.35 559.33 L1158.73 558.81 L1158.11 558.27 L1157.47 557.72 L1156.81 557.13 L1156.14 556.50 L1155.44 555.82 L1154.71 555.08 L1153.95 554.28 L1153.17 553.43 L1152.36 552.55 L1151.53 551.63 L1150.68 550.67 L1149.81 549.66 L1148.91 548.59 L1147.99 547.46 L1147.05 546.26 L1146.08 544.99 L1145.09 543.64 L1144.07 542.23 L1143.03 540.77 L1141.98 539.27 L1140.89 537.70 L1139.79 536.06 L1138.65 534.33 L1137.49 532.52 L1136.30 530.59 L1135.07 528.56 L1133.81 526.40 L1132.53 524.13 L1131.21 521.79 L1129.87 519.36 L1128.50 516.84 L1127.09 514.20 L1125.66 511.45 L1124.19 508.58 L1122.69 505.57 L1121.16 502.42 L1119.59 499.11 L1117.97 495.67 L1116.29 492.12 L1114.58 488.44 L1112.82 484.64 L1111.04 480.70 L1109.24 476.61 L1107.43 472.37 L1105.62 467.98 L1103.81 463.42 L1102.01 458.68 L1100.22 453.77 L1098.41 448.69 L1096.59 443.45 L1094.75 438.05 L1092.92 432.50 L1091.09 426.80 L1089.27 420.96 L1087.46 414.98 L1085.67 408.86 L1083.90 402.62 L1082.13 396.21 L1080.34 389.59 L1078.55 382.80 L1076.76 375.86 L1075.00 368.80 L1073.26 361.65 L1071.57 354.43 L1069.93 347.17 L1068.36 339.90 L1066.87 332.65 L1065.44 325.35 L1064.03 317.92 L1062.66 310.41 L1061.34 302.84 L1060.08 295.25 L1058.89 287.66 L1057.77 280.10 L1056.74 272.60 L1055.81 265.20 L1054.98 257.92 L1054.23 250.71 L1053.55 243.50 L1052.94 236.32 L1052.41 229.19 L1051.97 222.12 L1051.63 215.14 L1051.39 208.27 L1051.27 201.53 L1051.27 194.94 L1051.40 188.53 L1051.65 182.24 L1052.02 176.03 L1052.49 169.90 L1053.07 163.89 L1053.77 158.03 L1054.58 152.32 L1055.51 146.80 L1056.55 141.48 L1057.71 136.40 L1059.00 131.57 L1060.42 126.95 L1061.98 122.50 L1063.67 118.24 L1065.48 114.17 L1067.40 110.31 L1069.43 106.67 L1071.54 103.26 L1073.73 100.09 L1075.99 97.18 L1078.31 94.54 L1080.72 92.19 L1083.24 90.13 L1085.87 88.33 L1088.58 86.77 L1091.37 85.45 L1094.21 84.33 L1097.10 83.40 L1100.02 82.64 L1102.96 82.02 L1105.90 81.54 L1108.86 81.25 L1111.88 81.20 L1114.95 81.36 L1118.05 81.71 L1121.19 82.22 L1124.34 82.85 L1127.51 83.57 L1130.67 84.37 L1133.83 85.19 L1136.97 86.03 L1140.12 86.91 L1143.28 87.91 L1146.46 89.01 L1149.64 90.18 L1152.83 91.43 L1156.01 92.72 L1159.17 94.04 L1162.32 95.39 L1165.44 96.73 L1168.52 98.07 L1171.58 99.40 L1174.61 100.77 L1177.62 102.16 L1180.61 103.58 L1183.59 105.02 L1186.55 106.48 L1189.50 107.96 L1192.44 109.45 L1195.36 110.96 L1198.29 112.49 L1201.19 114.03 L1204.09 115.59 L1206.96 117.17 L1209.83 118.77 L1212.68 120.38 L1215.53 122.01 L1218.37 123.66 L1221.21 125.32 L1224.05 127.00 L1226.89 128.70 L1229.73 130.41 L1232.57 132.14 L1235.40 133.89 L1238.22 135.65 L1241.05 137.43 L1243.87 139.22 L1246.69 141.03 L1249.50 142.85 L1252.31 144.68 L1255.12 146.51 L1257.93 148.36 L1260.73 150.23 L1263.53 152.10 L1266.32 153.99 L1269.11 155.89 L1271.90 157.80 L1274.69 159.72 L1277.48 161.65 L1280.27 163.59 L1283.06 165.53 L1285.85 167.48 L1288.64 169.44 L1291.42 171.40 L1294.21 173.38 L1297.00 175.37 L1299.78 177.36 L1302.57 179.36 L1305.36 181.36 L1308.15 183.37 L1310.94 185.39 L1313.73 187.41 L1316.53 189.44 L1319.33 191.48 L1322.13 193.52 L1324.93 195.57 L1327.73 197.62 L1330.53 199.68 L1333.33 201.74 L1336.13 203.80 L1338.92 205.87 L1341.71 207.93 L1344.50 210.00 L1347.28 212.08 L1350.07 214.16 L1352.86 216.25 L1355.64 218.33 L1358.42 220.42 L1361.20 222.50 L1363.98 224.59 L1366.75 226.67 L1369.53 228.76 L1372.31 230.84 L1375.09 232.93 L1377.86 235.02 L1380.64 237.10 L1383.41 239.19 L1386.18 241.28 L1388.94 243.36 L1391.69 245.44 L1394.43 247.51 L1397.17 249.59 L1399.90 251.66 L1402.63 253.74 L1405.36 255.81 L1408.07 257.88 L1410.78 259.94 L1413.49 262.00 L1416.18 264.06 L1418.87 266.11 L1421.54 268.15 L1424.21 270.18 L1426.87 272.21 L1429.53 274.24 L1432.17 276.27 L1434.81 278.28 L1437.44 280.30 L1440.06 282.30 L1442.66 284.29 L1445.26 286.28 L1447.84 288.25 L1450.41 290.22 L1452.97 292.18 L1455.52 294.13 L1458.06 296.08 L1460.59 298.01 L1463.11 299.94 L1465.61 301.85 L1468.09 303.75 L1470.56 305.64 L1473.01 307.52 L1475.45 309.38 L1477.88 311.23 L1480.29 313.07 L1482.69 314.90 L1485.08 316.71 L1487.44 318.52 L1489.79 320.30 L1492.11 322.08 L1494.41 323.83 L1496.69 325.57 L1498.94 327.30 L1501.18 329.01 L1503.40 330.72 L1505.59 332.41 L1507.77 334.08 L1509.92 335.74 L1512.05 337.37 L1514.14 338.98 L1516.21 340.56 L1518.24 342.12 L1520.24 343.65 L1522.21 345.16 L1524.14 346.64 L1526.05 348.10 L1527.93 349.54 L1529.79 350.95 L1531.62 352.35 L1533.43 353.73 L1535.22 355.10 L1536.99 356.45 L1538.74 357.79 L1540.47 359.12 L1542.19 360.43 L1543.88 361.72 L1545.55 363.00 L1547.19 364.25 L1548.81 365.49 L1550.39 366.70 L1551.95 367.88 L1553.47 369.05 L1554.97 370.18 L1556.43 371.29 L1557.87 372.38 L1559.27 373.45 L1560.65 374.49 L1562.00 375.51 L1563.33 376.52 L1564.63 377.51 L1565.91 378.47 L1567.16 379.43 L1568.39 380.36 L1569.58 381.28 L1570.75 382.18 L1571.90 383.06 L1573.02 383.92 L1574.12 384.76 L1575.19 385.58 L1576.24 386.39 L1577.27 387.18 L1578.28 387.96 L1579.26 388.71 L1580.22 389.45 L1581.16 390.17 L1582.07 390.87 L1582.96 391.55 L1583.83 392.22 L1584.68 392.87 L1585.52 393.51 L1586.34 394.14 L1587.14 394.75 L1587.93 395.35 L1588.69 395.93 L1589.44 396.50 L1590.17 397.05 L1590.88 397.59 L1591.57 398.11 L1592.25 398.63 L1592.92 399.13 L1593.57 399.63 L1594.21 400.12 L1594.84 400.60 L1595.45 401.07 L1596.05 401.52 L1596.63 401.97 L1597.20 402.40 L1597.75 402.83 L1598.30 403.25 L1598.84 403.66 L1599.37 404.07 L1599.89 404.47 L1600.41 404.87 L1600.91 405.25 L1601.41 405.63 L1601.89 406.01 L1602.37 406.37 L1602.84 406.73 L1603.30 407.09 L1603.75 407.43 L1604.20 407.77 L1604.63 408.11 L1605.06 408.43 L1605.48 408.75 L1605.89 409.07 L1606.29 409.38 L1606.68 409.68 L1607.06 409.97 L1607.44 410.26 L1607.80 410.54 L1608.17 410.82 L1608.52 411.09 L1608.86 411.35 L1609.20 411.60 L1609.53 411.85 L1609.86 412.09 L1610.17 412.32 L1610.48 412.55 L1610.78 412.77 L1611.07 412.99 L1611.35 413.20 L1611.63 413.41 L1611.90 413.61 L1612.15 413.81 L1612.40 414.00 L1612.64 414.18 L1612.88 414.36 L1613.10 414.54 L1613.33 414.71 L1613.54 414.88 L1613.75 415.04 L1613.96 415.20 L1614.16 415.35 L1614.36 415.50 L1614.55 415.65 L1614.74 415.79 L1614.92 415.93 L1615.09 416.07 L1615.26 416.20 L1615.43 416.32 L1615.59 416.45 L1615.75 416.57 L1615.90 416.69 L1616.05 416.80 L1616.19 416.91 L1616.33 417.02 L1616.47 417.12 L1616.60 417.22 L1616.72 417.32 L1616.84 417.41 L1616.96 417.50 L1617.07 417.58 L1617.17 417.66 L1617.27 417.74 L1617.37 417.81 L1617.45 417.88 L1617.54 417.94 L1617.62 418.00 L1617.69 418.06 L1617.77 418.12 L1617.85 418.18 L1617.92 418.24 L1618.00 418.30 L1618.08 418.35 L1618.15 418.41 L1618.22 418.47 L1618.29 418.52 L1618.36 418.57 L1618.43 418.63 L1618.50 418.68 L1618.56 418.73 L1618.62 418.77 L1618.69 418.82 L1618.74 418.86 L1618.80 418.91 L1618.85 418.95 L1618.91 418.99 L1618.96 419.03 L1619.01 419.07 L1619.06 419.11 L1619.11 419.15 L1619.17 419.19 L1619.22 419.23 L1619.27 419.27 L1619.32 419.31 L1619.38 419.35 L1619.43 419.39 L1619.48 419.43 L1619.53 419.47 L1619.59 419.51 L1619.65 419.56 L1619.71 419.61 L1619.78 419.66 L1619.86 419.72 L1619.95 419.79 L1620.03 419.85 L1620.12 419.92 L1620.21 419.99 L1620.29 420.05 L1620.37 420.11 L1620.43 420.16 L1620.49 420.20 L1620.54 420.24 L1620.58 420.27 L1620.61 420.29 L1620.63 420.31 L1620.66 420.33 L1620.67 420.34 L1620.69 420.35 L1620.70 420.36 L1620.71 420.37 L1620.72 420.38 Z');
function col(x,y,o){
  if(y<0.0005)y=0.0005;
  var X=x/y,Z=(1-x-y)/y;
  var r=3.2406*X-1.5372-0.4986*Z,g=-0.9689*X+1.8758+0.0415*Z,b=0.0557*X-0.2040+1.0570*Z;
  var inside=(r>=0&&g>=0&&b>=0);
  if(r<0)r=0;if(g<0)g=0;if(b<0)b=0;
  var m=Math.max(r,g,b);if(m<=0)m=1;r/=m;g/=m;b/=m;
  if(inside){r=Math.pow(r,GI);g=Math.pow(g,GI);b=Math.pow(b,GI);}
  else{r*=K;g*=K;b*=K;}
  o[0]=r*255;o[1]=g*255;o[2]=b*255;
}
function paint(id,L,T,cx,cy,zx,zy,clip){
  var c=document.getElementById(id);if(!c||!c.getContext)return;
  var ctx=c.getContext('2d');var W=c.width,H=c.height;
  var img=ctx.createImageData(W,H),d=img.data,o=[0,0,0];
  for(var j=0;j<H;j++){for(var i=0;i<W;i++){
    var PX=cx+(L+i+0.5-zx)/5.0, PY=cy+(T+j+0.5-zy)/5.0;
    if(id=='cie'){PX=L+i+0.5;PY=T+j+0.5;}
    col((PX-CX0)/CSX,(CY0-PY)/CSY,o);
    var k=(j*W+i)*4;d[k]=o[0];d[k+1]=o[1];d[k+2]=o[2];d[k+3]=255;}}
  ctx.putImageData(img,0,0);
  if(clip){ctx.globalCompositeOperation='destination-in';ctx.setTransform(1,0,0,1,-L,-T);ctx.fill(LP);}
}
paint('cie',1049,79,0,0,0,0,true);
paint('inset',1506,86,1374.6,277.6,1600.5,158.9,false);
})();
</script></body></html>
